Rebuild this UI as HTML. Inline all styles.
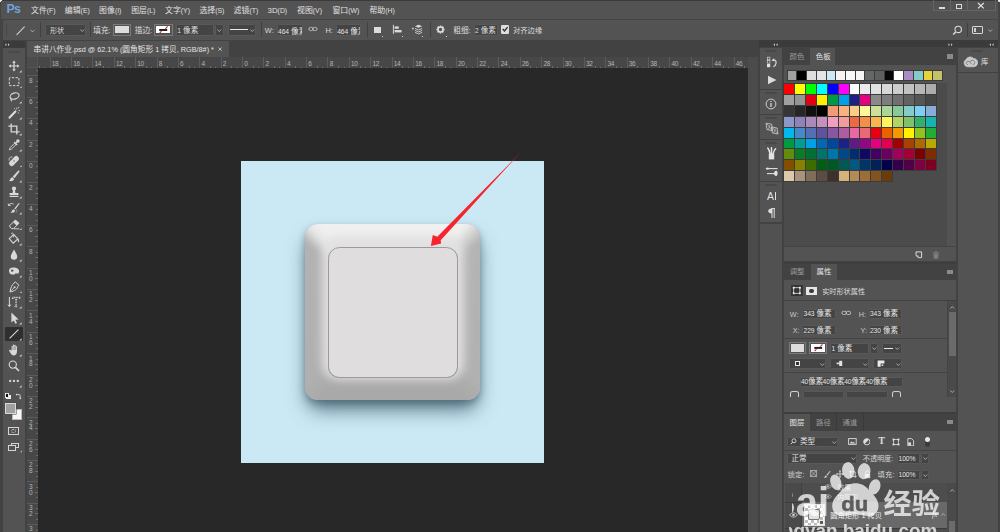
<!DOCTYPE html>
<html lang="zh-CN"><head><meta charset="utf-8"><title>Photoshop</title>
<style>
*{box-sizing:border-box;margin:0;padding:0}
html,body{width:1000px;height:532px;overflow:hidden;background:#535353}
body{position:relative;font-family:"Liberation Sans","Noto Sans CJK SC",sans-serif;font-size:7.6px;color:#d8d8d8;line-height:1}
.a{position:absolute}
i{position:absolute;display:block;font-style:normal}
.t{position:absolute;white-space:nowrap;line-height:10px;height:10px}
#sw i{outline:0.4px solid #3c3c3c}
#rh b,#rv b{position:absolute;font-weight:normal;font-size:6.5px;line-height:6px;color:#b4b4b4;letter-spacing:-0.35px}
.ig{left:759.8px;width:22.2px;background:#535353}
.gr{left:765px;width:12px;height:1.5px;background:#484848;border-radius:1px}
.hb{width:6px;height:4.2px;background:#8a8a8a}
.p{font-size:7.2px;color:#c9c9c9}
.pv{font-size:7.5px;color:#e4e4e4}
em{font-style:normal;font-size:7.3px}
u{text-decoration:none;font-size:6.7px;letter-spacing:-0.1px}
.m{top:5.6px}
.o{top:25.6px;font-size:7.6px;color:#dedede}
.sep{top:22px;width:0.8px;height:15.4px;background:#404040}
.fld{top:24.4px;height:11.2px;background:#444;border:0.6px solid #595959;border-radius:1.3px}
.chev{top:29.4px;width:5px;height:3.4px;overflow:visible}
.chev path{stroke:#bdbdbd;stroke-width:0.8;fill:none}
.dot{top:35.6px;width:1.3px;height:1.1px;background:#cfcfcf}
s{text-decoration:none;font-size:6.9px}
</style></head><body>
<!-- window frame -->
<div class="a" style="left:0;top:0;width:1000px;height:1px;background:#3a3a3a"></div>
<div class="a" style="left:997.5px;top:0;width:3px;height:532px;background:#444"></div>
<div class="a" style="left:0;top:0;width:2.6px;height:532px;background:#444"></div>
<div class="a" style="left:-1px;top:-1px;width:3px;height:3px;border-radius:50%;background:#e8eef6"></div>
<div class="a" style="left:998px;top:-1px;width:3px;height:3px;border-radius:50%;background:#e8eef6"></div>
<!-- menubar -->
<div class="a" id="menubar" style="left:0.8px;top:1px;width:997px;height:17.7px;background:#535353"></div>
<div class="t" style="left:6.6px;top:3.2px;font-size:12.3px;line-height:13px;height:13px;font-weight:bold;color:#6ea4d9;letter-spacing:-0.9px">Ps</div>
<div id="menus" style="font-size:7.9px;color:#e2e2e2">
<div class="t m" style="left:31px">文件<s>(F)</s></div>
<div class="t m" style="left:64.8px">编辑<s>(E)</s></div>
<div class="t m" style="left:99.1px">图像<s>(I)</s></div>
<div class="t m" style="left:131.2px">图层<s>(L)</s></div>
<div class="t m" style="left:165px">文字<s>(Y)</s></div>
<div class="t m" style="left:199.4px">选择<s>(S)</s></div>
<div class="t m" style="left:233.6px">滤镜<s>(T)</s></div>
<div class="t m" style="left:267.5px">3D<s>(D)</s></div>
<div class="t m" style="left:297px">视图<s>(V)</s></div>
<div class="t m" style="left:332.4px">窗口<s>(W)</s></div>
<div class="t m" style="left:369.4px">帮助<s>(H)</s></div>
</div>
<!-- window controls -->
<div class="a" style="left:933.3px;top:0;width:62.6px;height:11.4px;border:0.7px solid #646464;border-top:none"></div>
<div class="a" style="left:950.3px;top:0;width:0.7px;height:11.2px;background:#646464"></div>
<div class="a" style="left:967px;top:0;width:0.7px;height:11.2px;background:#646464"></div>
<div class="a" style="left:938.9px;top:7.1px;width:6px;height:1.9px;background:#dcdcdc"></div>
<div class="a" style="left:955.6px;top:4.3px;width:6.6px;height:4.6px;border:1.1px solid #dcdcdc;border-top-width:1.6px"></div>
<svg class="a" style="left:977px;top:2px" width="8" height="8" viewBox="0 0 8 8"><path d="M1 1 L6.8 6.4 M6.8 1 L1 6.4" stroke="#e0e0e0" stroke-width="1.2" fill="none"/></svg>

<div class="a" style="left:0;top:18.6px;width:1000px;height:1.7px;background:#454545"></div>
<!-- options bar -->
<div class="a" id="optbar" style="left:2.6px;top:20.1px;width:995px;height:20px;background:#535353;border-radius:1.5px 1.5px 0 0"></div>
<div id="opts">
<!-- grip -->
<div class="a" style="left:6.2px;top:23.5px;width:0.8px;height:12.5px;background:#474747"></div>
<!-- line tool icon -->
<svg class="a" style="left:14px;top:24px" width="24" height="14" viewBox="0 0 24 14"><path d="M2.6 10.8 L10.6 2.6" stroke="#d0d0d0" stroke-width="1.1" fill="none"/><path d="M16.6 5.9 L18.5 7.9 L20.4 5.9" stroke="#bdbdbd" stroke-width="0.8" fill="none"/></svg>
<div class="a sep" style="left:40px"></div>
<!-- shape dropdown -->
<div class="a fld" style="left:44.9px;width:41px"></div>
<div class="t o" style="left:50px;font-size:7.1px">形状</div>
<svg class="a chev" style="left:80px"><path d="M0.4 0.5 L2.3 2.5 L4.2 0.5"/></svg>
<div class="a sep" style="left:89.5px"></div>
<div class="t o" style="left:93.3px">填充:</div>
<div class="a" style="left:113px;top:23.6px;width:18.2px;height:12px;border:0.8px solid #7a7a7a;padding:1.2px"><div style="width:100%;height:100%;background:#dfdcdc"></div></div>
<div class="t o" style="left:134.8px">描边:</div>
<div class="a" style="left:154.2px;top:23.6px;width:18.4px;height:12px;border:0.8px solid #7a7a7a;padding:1.2px"><div style="width:100%;height:100%;background:#fff;position:relative">
<svg class="a" style="left:0;top:0" width="14.4" height="8" viewBox="0 0 14.4 8"><rect x="3.2" y="3" width="8" height="2" fill="#222"/><path d="M3.6 7.4 L5.4 5.2 M9.4 2.8 L11.6 0.4" stroke="#e8202a" stroke-width="1.1"/></svg></div></div>
<div class="a fld" style="left:175.9px;width:38.2px"></div>
<div class="t o" style="left:177.3px"><u>1</u> 像素</div>
<div class="a fld" style="left:215.2px;width:8.8px"></div>
<svg class="a chev" style="left:217.3px"><path d="M0.4 0.5 L2.3 2.5 L4.2 0.5"/></svg>
<div class="a fld" style="left:227.8px;width:28.6px"></div>
<div class="a" style="left:230.1px;top:29.1px;width:17.5px;height:1.3px;background:#e8e8e8"></div>
<svg class="a chev" style="left:249.6px"><path d="M0.4 0.5 L2.3 2.5 L4.2 0.5"/></svg>
<div class="a sep" style="left:260.8px"></div>
<div class="t o" style="left:264.8px;font-size:7.4px">W:</div>
<div class="a fld" style="left:276.6px;width:26px;overflow:hidden"><div class="t" style="left:0.5px;top:1.2px;font-size:7.7px;color:#e6e6e6"><u>464</u> 像素</div></div>
<svg class="a" style="left:307.6px;top:26.4px" width="10" height="6" viewBox="0 0 10 6"><rect x="0.9" y="1.4" width="4.2" height="3.2" rx="1.6" fill="none" stroke="#c4c4c4" stroke-width="0.9"/><rect x="4.9" y="1.4" width="4.2" height="3.2" rx="1.6" fill="none" stroke="#c4c4c4" stroke-width="0.9"/></svg>
<div class="t o" style="left:325.4px;font-size:7.4px">H:</div>
<div class="a fld" style="left:335.7px;width:25.8px;overflow:hidden"><div class="t" style="left:0.5px;top:1.2px;font-size:7.7px;color:#e6e6e6"><u>464</u> 像素</div></div>
<div class="a sep" style="left:366.7px"></div>
<!-- path ops -->
<div class="a" style="left:373.8px;top:26.7px;width:6.9px;height:6.3px;background:#dcdcdc"></div>
<div class="a dot" style="left:381.7px"></div>
<!-- align -->
<svg class="a" style="left:392px;top:24px" width="11" height="11" viewBox="0 0 11 11"><path d="M1.4 0.8 V9.8" stroke="#d8d8d8" stroke-width="1"/><rect x="2.6" y="2.4" width="4.2" height="2.4" fill="#d8d8d8"/><rect x="2.6" y="6" width="7" height="2.4" fill="#d8d8d8"/></svg>
<div class="a dot" style="left:401.9px"></div>
<!-- arrange -->
<svg class="a" style="left:411px;top:24px" width="13" height="12" viewBox="0 0 13 12"><path d="M0.8 4.6 H3 M1.9 3.5 V5.7" stroke="#d8d8d8" stroke-width="0.7"/><path d="M7.6 0.8 L11.2 2.3 L7.6 3.8 L4 2.3 Z" fill="#dcdcdc"/><path d="M4 4.4 L7.6 5.9 L11.2 4.4 M4 6.4 L7.6 7.9 L11.2 6.4 M4 8.4 L7.6 9.9 L11.2 8.4" stroke="#cfcfcf" stroke-width="0.9" fill="none"/></svg>
<div class="a dot" style="left:421.8px"></div>
<div class="a sep" style="left:429.8px"></div>
<!-- gear -->
<svg class="a" style="left:436px;top:25px" width="9" height="9" viewBox="0 0 9 9"><circle cx="4.5" cy="4.5" r="2.5" fill="none" stroke="#e0e0e0" stroke-width="1.5"/><g stroke="#e0e0e0" stroke-width="1.5"><path d="M4.5 0.4 V1.8 M4.5 7.2 V8.6 M0.4 4.5 H1.8 M7.2 4.5 H8.6 M1.6 1.6 L2.6 2.6 M6.4 6.4 L7.4 7.4 M1.6 7.4 L2.6 6.4 M6.4 2.6 L7.4 1.6"/></g></svg>
<div class="a dot" style="left:445.5px"></div>
<div class="t o" style="left:453.3px">粗细:</div>
<div class="a fld" style="left:473.6px;width:24.8px"></div>
<div class="t o" style="left:475px"><u>2</u> 像素</div>
<!-- checkbox -->
<div class="a" style="left:500.9px;top:25.3px;width:8.2px;height:8.3px;background:#dedede;border-radius:1.2px"></div>
<svg class="a" style="left:500.9px;top:25.3px" width="8.2" height="8.3" viewBox="0 0 8.2 8.3"><path d="M1.7 4 L3.5 5.9 L6.6 2.1" stroke="#2c2c2c" stroke-width="1.3" fill="none"/></svg>
<div class="t o" style="left:513px;font-size:7.3px">对齐边缘</div>
<!-- right: search / workspace -->
<svg class="a" style="left:951.5px;top:24.5px" width="11" height="11" viewBox="0 0 11 11"><circle cx="6.2" cy="4.4" r="3.2" fill="none" stroke="#dcdcdc" stroke-width="1.1"/><path d="M3.9 6.8 L1.2 9.5" stroke="#dcdcdc" stroke-width="1.5"/></svg>
<div class="a" style="left:967.4px;top:23px;width:0.8px;height:13.6px;background:#404040"></div>
<div class="a" style="left:972.2px;top:25.9px;width:10.8px;height:8px;border:1px solid #d8d8d8;border-radius:1px"></div>
<div class="a" style="left:973.6px;top:27.6px;width:2.6px;height:4.8px;background:#d0d0d0"></div>
<svg class="a chev" style="left:988.4px"><path d="M0.4 0.5 L2.3 2.5 L4.2 0.5"/></svg>
</div>

<!-- dark strip under options -->
<div class="a" style="left:0;top:40px;width:1000px;height:492px;background:#424242"></div>
<!-- toolbar -->
<div class="a" style="left:3.2px;top:40.5px;width:22.3px;height:7px;background:#3b3b3b"></div>
<div class="a" style="left:3.2px;top:47.6px;width:22.3px;height:485px;background:#535353"></div>
<div class="a" style="left:8.3px;top:51.2px;width:11.6px;height:1.6px;background:#494949;border-radius:1px"></div>
<svg class="a" style="left:5.90px;top:57.90px" width="16" height="16" viewBox="0 0 16 16"><path d="M8 2.6 L9.8 4.8 H8.6 V7.4 H11.2 V6.2 L13.4 8 L11.2 9.8 V8.6 H8.6 V11.2 H9.8 L8 13.4 L6.2 11.2 H7.4 V8.6 H4.8 V9.8 L2.6 8 L4.8 6.2 V7.4 H7.4 V4.8 H6.2 Z" fill="#d9d9d9"/></svg>
<svg class="a" style="left:19.4px;top:69.90px" width="2.8" height="2.8" viewBox="0 0 2.8 2.8"><path d="M2.6 0.2 V2.6 H0.2 Z" fill="#d2d2d2"/></svg>
<svg class="a" style="left:5.90px;top:73.67px" width="16" height="16" viewBox="0 0 16 16"><rect x="3.3" y="3.7" width="9.6" height="7.9" fill="none" stroke="#d9d9d9" stroke-width="1" stroke-dasharray="2.3 1.4" stroke-dashoffset="1.1"/></svg>
<svg class="a" style="left:19.4px;top:85.67px" width="2.8" height="2.8" viewBox="0 0 2.8 2.8"><path d="M2.6 0.2 V2.6 H0.2 Z" fill="#d2d2d2"/></svg>
<svg class="a" style="left:5.90px;top:89.44px" width="16" height="16" viewBox="0 0 16 16"><ellipse cx="8.6" cy="7" rx="4.6" ry="3" transform="rotate(-18 8.6 7)" fill="none" stroke="#d9d9d9" stroke-width="1.1"/><path d="M4.8 8.6 C4.2 10 5 11.4 6.4 11.2 M5 9.4 L5.4 12.4" stroke="#d9d9d9" stroke-width="0.9" fill="none"/></svg>
<svg class="a" style="left:19.4px;top:101.44px" width="2.8" height="2.8" viewBox="0 0 2.8 2.8"><path d="M2.6 0.2 V2.6 H0.2 Z" fill="#d2d2d2"/></svg>
<svg class="a" style="left:5.90px;top:105.21px" width="16" height="16" viewBox="0 0 16 16"><path d="M3.6 12.6 L9.4 6.4" stroke="#d9d9d9" stroke-width="2.2" stroke-linecap="round"/><path d="M10.8 2.6 V4.4 M12.6 5.6 H14 M12 3.2 L13.2 2.2 M11.8 7.4 L13 8.4 M8.2 3.2 L9.2 4.2" stroke="#d9d9d9" stroke-width="0.9"/></svg>
<svg class="a" style="left:19.4px;top:117.21px" width="2.8" height="2.8" viewBox="0 0 2.8 2.8"><path d="M2.6 0.2 V2.6 H0.2 Z" fill="#d2d2d2"/></svg>
<svg class="a" style="left:5.90px;top:120.98px" width="16" height="16" viewBox="0 0 16 16"><path d="M5.2 2.4 V10.8 H13.6 M2.4 5.2 H10.8 V13.6" fill="none" stroke="#d9d9d9" stroke-width="1.3"/></svg>
<svg class="a" style="left:19.4px;top:132.98px" width="2.8" height="2.8" viewBox="0 0 2.8 2.8"><path d="M2.6 0.2 V2.6 H0.2 Z" fill="#d2d2d2"/></svg>
<svg class="a" style="left:5.90px;top:136.75px" width="16" height="16" viewBox="0 0 16 16"><path d="M3.4 12.8 L4 10.8 L8.6 6.2 L10 7.6 L5.4 12.2 Z" fill="none" stroke="#d9d9d9" stroke-width="0.9"/><path d="M8.2 5 L11.2 8 M9.6 6.4 L11.6 4.4" stroke="#d9d9d9" stroke-width="1.3"/><circle cx="11.9" cy="4" r="1.7" fill="#d9d9d9"/></svg>
<svg class="a" style="left:19.4px;top:148.75px" width="2.8" height="2.8" viewBox="0 0 2.8 2.8"><path d="M2.6 0.2 V2.6 H0.2 Z" fill="#d2d2d2"/></svg>
<svg class="a" style="left:5.90px;top:152.52px" width="16" height="16" viewBox="0 0 16 16"><rect x="2.2" y="5.4" width="11.6" height="5.2" rx="2.2" transform="rotate(-45 8 8)" fill="#d9d9d9"/><path d="M6.4 8 H9.6 M8 6.4 V9.6" stroke="#535353" stroke-width="0.6" stroke-dasharray="0.6 0.6" transform="rotate(-45 8 8)"/><path d="M3.2 7.6 C2.4 5.2 4.4 3.4 6.4 4" fill="none" stroke="#d9d9d9" stroke-width="0.8"/></svg>
<svg class="a" style="left:19.4px;top:164.52px" width="2.8" height="2.8" viewBox="0 0 2.8 2.8"><path d="M2.6 0.2 V2.6 H0.2 Z" fill="#d2d2d2"/></svg>
<svg class="a" style="left:5.90px;top:168.29px" width="16" height="16" viewBox="0 0 16 16"><path d="M12.6 2.2 L6.8 8.6 L8.4 10.2 L13.6 3.4 Z" fill="#d9d9d9"/><path d="M6.2 9.2 C4.2 9.6 4.8 12 2.8 12.8 C5.4 13.8 8.2 12.8 8 10.8 Z" fill="#d9d9d9"/></svg>
<svg class="a" style="left:19.4px;top:180.29px" width="2.8" height="2.8" viewBox="0 0 2.8 2.8"><path d="M2.6 0.2 V2.6 H0.2 Z" fill="#d2d2d2"/></svg>
<svg class="a" style="left:5.90px;top:184.06px" width="16" height="16" viewBox="0 0 16 16"><circle cx="8" cy="4.6" r="2.1" fill="#d9d9d9"/><path d="M7 6 H9 L9.4 9 H12.4 V11 H3.6 V9 H6.6 Z" fill="#d9d9d9"/><rect x="3.6" y="11.8" width="8.8" height="1.2" fill="#d9d9d9"/></svg>
<svg class="a" style="left:19.4px;top:196.06px" width="2.8" height="2.8" viewBox="0 0 2.8 2.8"><path d="M2.6 0.2 V2.6 H0.2 Z" fill="#d2d2d2"/></svg>
<svg class="a" style="left:5.90px;top:199.83px" width="16" height="16" viewBox="0 0 16 16"><path d="M13 2.8 L8.4 8.6 L9.4 9.6 L13.6 3.4 Z" fill="#d9d9d9"/><path d="M7.8 9.2 C6 9.4 6.4 11.6 4.4 12.4 C6.8 13.2 9 12.2 9 10.4 Z" fill="#d9d9d9"/><path d="M2.6 5.4 C3.6 3.4 6 3 7.6 4.2 M2.2 3.6 L2.6 5.6 L4.6 5.4" fill="none" stroke="#d9d9d9" stroke-width="0.9"/><path d="M10.6 9.4 C11.2 10.6 10.8 11.8 10 12.6" fill="none" stroke="#9a9a9a" stroke-width="0.8"/></svg>
<svg class="a" style="left:19.4px;top:211.83px" width="2.8" height="2.8" viewBox="0 0 2.8 2.8"><path d="M2.6 0.2 V2.6 H0.2 Z" fill="#d2d2d2"/></svg>
<svg class="a" style="left:5.90px;top:215.60px" width="16" height="16" viewBox="0 0 16 16"><path d="M3.4 10 L9.4 4 L13 7.2 L7.6 12.6 H5.4 Z" fill="none" stroke="#d9d9d9" stroke-width="1"/><path d="M7.2 6.2 L9.4 4 L13 7.2 L10.6 9.6 Z" fill="#d9d9d9"/><path d="M7.6 12.8 H13.4" stroke="#d9d9d9" stroke-width="0.9"/></svg>
<svg class="a" style="left:19.4px;top:227.60px" width="2.8" height="2.8" viewBox="0 0 2.8 2.8"><path d="M2.6 0.2 V2.6 H0.2 Z" fill="#d2d2d2"/></svg>
<svg class="a" style="left:5.90px;top:231.37px" width="16" height="16" viewBox="0 0 16 16"><path d="M3.2 7.6 L7.8 3.6 L11.8 8 L7.2 12.2 Z" fill="none" stroke="#d9d9d9" stroke-width="1.1"/><path d="M5.4 3 C5.2 1.8 7 1.6 7.2 3 L7.4 6.4" fill="none" stroke="#d9d9d9" stroke-width="0.8"/><path d="M11 6.4 C12.8 7.4 13.6 9.4 13 11.6 C11.8 11 11.4 9.4 11.8 8 Z" fill="#d9d9d9"/></svg>
<svg class="a" style="left:19.4px;top:243.37px" width="2.8" height="2.8" viewBox="0 0 2.8 2.8"><path d="M2.6 0.2 V2.6 H0.2 Z" fill="#d2d2d2"/></svg>
<svg class="a" style="left:5.90px;top:247.14px" width="16" height="16" viewBox="0 0 16 16"><path d="M8 2.6 C9.4 5.4 11.2 7.4 11.2 9.6 A3.2 3.2 0 0 1 4.8 9.6 C4.8 7.4 6.6 5.4 8 2.6 Z" fill="#d9d9d9"/></svg>
<svg class="a" style="left:19.4px;top:259.14px" width="2.8" height="2.8" viewBox="0 0 2.8 2.8"><path d="M2.6 0.2 V2.6 H0.2 Z" fill="#d2d2d2"/></svg>
<svg class="a" style="left:5.90px;top:262.91px" width="16" height="16" viewBox="0 0 16 16"><path d="M3 7.6 C3 4.6 6.2 4.2 8.6 4.6 C11.2 5 13.2 6.4 13.2 8.4 L12.4 10.6 H9.2 L8.6 11.6 H5.6 C3.8 11.2 3 9.6 3 7.6 Z" fill="#d9d9d9"/><circle cx="6.2" cy="7.6" r="1.2" fill="#535353"/></svg>
<svg class="a" style="left:19.4px;top:274.91px" width="2.8" height="2.8" viewBox="0 0 2.8 2.8"><path d="M2.6 0.2 V2.6 H0.2 Z" fill="#d2d2d2"/></svg>
<svg class="a" style="left:5.90px;top:278.68px" width="16" height="16" viewBox="0 0 16 16"><path d="M9.2 2.8 L13 6.2 L11.8 7.4 C11.4 10 9 12 4 13 C4.6 8.4 6.2 5.6 8.2 4 Z" fill="none" stroke="#d9d9d9" stroke-width="1"/><path d="M4.2 12.8 L8.2 8.6" stroke="#d9d9d9" stroke-width="0.8"/><circle cx="8.6" cy="8.2" r="1" fill="#d9d9d9"/></svg>
<svg class="a" style="left:19.4px;top:290.68px" width="2.8" height="2.8" viewBox="0 0 2.8 2.8"><path d="M2.6 0.2 V2.6 H0.2 Z" fill="#d2d2d2"/></svg>
<svg class="a" style="left:5.90px;top:294.45px" width="16" height="16" viewBox="0 0 16 16"><path d="M3.4 3 V12.2 M2 10.6 L3.4 12.6 L4.8 10.6" fill="none" stroke="#d9d9d9" stroke-width="1"/><path d="M6.6 5 V3.4 H13.6 V5 M10.1 3.4 V12.4 M8.6 12.6 H11.6" fill="none" stroke="#d9d9d9" stroke-width="1.5" stroke-dasharray="0.9 0.7"/></svg>
<svg class="a" style="left:19.4px;top:306.45px" width="2.8" height="2.8" viewBox="0 0 2.8 2.8"><path d="M2.6 0.2 V2.6 H0.2 Z" fill="#d2d2d2"/></svg>
<svg class="a" style="left:5.90px;top:310.22px" width="16" height="16" viewBox="0 0 16 16"><path d="M5.4 2.4 V12.6 L7.8 10.4 L9.4 13.8 L11 13 L9.4 9.8 L12.6 9.6 Z" fill="#d9d9d9"/></svg>
<svg class="a" style="left:19.4px;top:322.22px" width="2.8" height="2.8" viewBox="0 0 2.8 2.8"><path d="M2.6 0.2 V2.6 H0.2 Z" fill="#d2d2d2"/></svg>
<div class="a" style="left:4.9px;top:326.79px;width:18.6px;height:14.2px;background:#2f2f2f;border-radius:1px"></div>
<svg class="a" style="left:5.90px;top:325.99px" width="16" height="16" viewBox="0 0 16 16"><path d="M3.6 12.4 L12.4 3.6" stroke="#d9d9d9" stroke-width="1.1"/></svg>
<svg class="a" style="left:19.4px;top:337.99px" width="2.8" height="2.8" viewBox="0 0 2.8 2.8"><path d="M2.6 0.2 V2.6 H0.2 Z" fill="#d2d2d2"/></svg>
<svg class="a" style="left:5.90px;top:341.76px" width="16" height="16" viewBox="0 0 16 16"><path d="M5.6 8.4 V4.4 C5.6 3.4 6.9 3.4 6.9 4.4 V3.2 C6.9 2.2 8.3 2.2 8.3 3.2 V3.6 C8.3 2.6 9.7 2.6 9.7 3.6 V4.6 C9.7 3.8 11 3.8 11 4.8 V9.6 C11 12 9.8 13.4 8.2 13.4 H7.4 C5.8 13.4 4.8 12 3.2 8.8 C2.8 7.8 4 7.2 4.6 8.2 Z" fill="#d9d9d9"/><path d="M6.9 4.4 V8 M8.3 3.6 V8 M9.7 4.6 V8" stroke="#535353" stroke-width="0.45"/></svg>
<svg class="a" style="left:19.4px;top:353.76px" width="2.8" height="2.8" viewBox="0 0 2.8 2.8"><path d="M2.6 0.2 V2.6 H0.2 Z" fill="#d2d2d2"/></svg>
<svg class="a" style="left:5.90px;top:357.53px" width="16" height="16" viewBox="0 0 16 16"><circle cx="6.8" cy="6.6" r="3.6" fill="none" stroke="#d9d9d9" stroke-width="1.1"/><path d="M9.4 9.4 L13 13" stroke="#d9d9d9" stroke-width="1.7"/></svg>
<svg class="a" style="left:5.90px;top:373.30px" width="16" height="16" viewBox="0 0 16 16"><circle cx="4.2" cy="8" r="1.15" fill="#d9d9d9"/><circle cx="8" cy="8" r="1.15" fill="#d9d9d9"/><circle cx="11.8" cy="8" r="1.15" fill="#d9d9d9"/></svg>
<svg class="a" style="left:19.4px;top:385.30px" width="2.8" height="2.8" viewBox="0 0 2.8 2.8"><path d="M2.6 0.2 V2.6 H0.2 Z" fill="#d2d2d2"/></svg>
<div class="a" style="left:6.4px;top:394.8px;width:4.2px;height:4.2px;background:#f0f0f0"></div>
<div class="a" style="left:4.6px;top:393.2px;width:4.4px;height:4.4px;background:#111;border:0.6px solid #e8e8e8"></div>
<svg class="a" style="left:15.4px;top:392.6px" width="7" height="7" viewBox="0 0 7 7"><path d="M1.4 1.6 H4.4 C5 1.6 5.2 1.8 5.2 2.4 V5.4" fill="none" stroke="#d9d9d9" stroke-width="0.9"/><path d="M2 0.4 L0.6 1.6 L2 2.8 Z M4 4.8 L5.2 6.4 L6.4 4.8 Z" fill="#d9d9d9"/></svg>
<div class="a" style="left:11.6px;top:409px;width:10.8px;height:10.8px;background:#f6f6f6;border:0.5px solid #bbb"></div>
<div class="a" style="left:5.2px;top:403px;width:11.2px;height:11px;background:#a0a0a0;border:0.8px solid #dadada;box-shadow:0 0 0 0.5px #444"></div>
<div class="a" style="left:8.2px;top:427.2px;width:10.6px;height:7.6px;border:0.9px solid #d4d4d4"></div>
<div class="a" style="left:11.3px;top:428.9px;width:4.4px;height:4.2px;border:0.8px dotted #cfcfcf;border-radius:50%"></div>
<div class="a" style="left:11.2px;top:443px;width:7.6px;height:5.4px;border:0.9px solid #d4d4d4"></div>
<div class="a" style="left:8.2px;top:445.4px;width:7.4px;height:5.4px;border:0.9px solid #d4d4d4;background:#535353"></div>
<svg class="a" style="left:19.6px;top:450.4px" width="2.4" height="2.4" viewBox="0 0 2.4 2.4"><path d="M2.2 0.2 V2.2 H0.2 Z" fill="#c8c8c8"/></svg>
<svg class="a" style="left:5.4px;top:42.6px" width="6" height="3.4" viewBox="0 0 6 3.4"><path d="M0.4 0.3 L2 1.7 L0.4 3.1 Z M3 0.3 L4.6 1.7 L3 3.1 Z" fill="#c4c4c4"/></svg>
<!-- document tab bar -->
<div class="a" style="left:27.2px;top:41px;width:730px;height:16.4px;background:#424242"></div>
<div class="a" style="left:27.2px;top:41px;width:202px;height:16.4px;background:#535353"></div>
<div class="t" id="tabtitle" style="left:33.5px;top:44.6px;font-size:7.7px;color:#e4e4e4">串讲八作业<em>.psd @ 62.1% (</em>圆角矩形<em> 1 </em>拷贝<em>, RGB/8#) *</em></div>
<svg class="a" style="left:218.1px;top:47.2px" width="4.4" height="4.4" viewBox="0 0 5 5"><path d="M0.6 0.6 L4.2 4.2 M4.2 0.6 L0.6 4.2" stroke="#dcdcdc" stroke-width="0.9"/></svg>
<!-- rulers -->
<div class="a" style="left:27.2px;top:57.4px;width:721px;height:10.8px;background:#474747"></div>
<div class="a" style="left:27.2px;top:57.4px;width:10.6px;height:475px;background:#474747"></div>
<div class="a" style="left:748px;top:57.4px;width:10px;height:475px;background:#4b4b4b"></div>
<!-- canvas -->
<div class="a" style="left:37.8px;top:68.2px;width:710.2px;height:464px;background:#282828"></div>
<div class="a" style="left:27.2px;top:57.4px;width:10.6px;height:10.8px;background:#4c4c4c;border-right:0.7px solid #555;border-bottom:0.7px solid #555"></div>
<div id="rh" class="a" style="left:37.8px;top:57.4px;width:710.2px;height:10.8px;overflow:hidden">
<i style="left:1.18px;top:8.90px;width:0.7px;height:1.9px;background:#707070"></i>
<i style="left:6.53px;top:9.50px;width:0.7px;height:1.3px;background:#707070"></i>
<i style="left:11.87px;top:0;width:0.8px;height:10.8px;background:#5b5b5b"></i>
<b style="left:14.07px;top:3.9px">18</b>
<i style="left:22.55px;top:8.90px;width:0.7px;height:1.9px;background:#707070"></i>
<i style="left:27.90px;top:9.50px;width:0.7px;height:1.3px;background:#707070"></i>
<i style="left:33.24px;top:0;width:0.8px;height:10.8px;background:#5b5b5b"></i>
<b style="left:35.44px;top:3.9px">16</b>
<i style="left:43.92px;top:8.90px;width:0.7px;height:1.9px;background:#707070"></i>
<i style="left:49.27px;top:9.50px;width:0.7px;height:1.3px;background:#707070"></i>
<i style="left:54.61px;top:0;width:0.8px;height:10.8px;background:#5b5b5b"></i>
<b style="left:56.81px;top:3.9px">14</b>
<i style="left:65.30px;top:8.90px;width:0.7px;height:1.9px;background:#707070"></i>
<i style="left:70.64px;top:9.50px;width:0.7px;height:1.3px;background:#707070"></i>
<i style="left:75.98px;top:0;width:0.8px;height:10.8px;background:#5b5b5b"></i>
<b style="left:78.18px;top:3.9px">12</b>
<i style="left:86.67px;top:8.90px;width:0.7px;height:1.9px;background:#707070"></i>
<i style="left:92.01px;top:9.50px;width:0.7px;height:1.3px;background:#707070"></i>
<i style="left:97.35px;top:0;width:0.8px;height:10.8px;background:#5b5b5b"></i>
<b style="left:99.55px;top:3.9px">10</b>
<i style="left:108.03px;top:8.90px;width:0.7px;height:1.9px;background:#707070"></i>
<i style="left:113.38px;top:9.50px;width:0.7px;height:1.3px;background:#707070"></i>
<i style="left:118.72px;top:0;width:0.8px;height:10.8px;background:#5b5b5b"></i>
<b style="left:120.92px;top:3.9px">8</b>
<i style="left:129.40px;top:8.90px;width:0.7px;height:1.9px;background:#707070"></i>
<i style="left:134.75px;top:9.50px;width:0.7px;height:1.3px;background:#707070"></i>
<i style="left:140.09px;top:0;width:0.8px;height:10.8px;background:#5b5b5b"></i>
<b style="left:142.29px;top:3.9px">6</b>
<i style="left:150.77px;top:8.90px;width:0.7px;height:1.9px;background:#707070"></i>
<i style="left:156.12px;top:9.50px;width:0.7px;height:1.3px;background:#707070"></i>
<i style="left:161.46px;top:0;width:0.8px;height:10.8px;background:#5b5b5b"></i>
<b style="left:163.66px;top:3.9px">4</b>
<i style="left:172.14px;top:8.90px;width:0.7px;height:1.9px;background:#707070"></i>
<i style="left:177.49px;top:9.50px;width:0.7px;height:1.3px;background:#707070"></i>
<i style="left:182.83px;top:0;width:0.8px;height:10.8px;background:#5b5b5b"></i>
<b style="left:185.03px;top:3.9px">2</b>
<i style="left:193.51px;top:8.90px;width:0.7px;height:1.9px;background:#707070"></i>
<i style="left:198.86px;top:9.50px;width:0.7px;height:1.3px;background:#707070"></i>
<i style="left:204.20px;top:0;width:0.8px;height:10.8px;background:#5b5b5b"></i>
<b style="left:206.40px;top:3.9px">0</b>
<i style="left:214.88px;top:8.90px;width:0.7px;height:1.9px;background:#707070"></i>
<i style="left:220.23px;top:9.50px;width:0.7px;height:1.3px;background:#707070"></i>
<i style="left:225.57px;top:0;width:0.8px;height:10.8px;background:#5b5b5b"></i>
<b style="left:227.77px;top:3.9px">2</b>
<i style="left:236.25px;top:8.90px;width:0.7px;height:1.9px;background:#707070"></i>
<i style="left:241.60px;top:9.50px;width:0.7px;height:1.3px;background:#707070"></i>
<i style="left:246.94px;top:0;width:0.8px;height:10.8px;background:#5b5b5b"></i>
<b style="left:249.14px;top:3.9px">4</b>
<i style="left:257.62px;top:8.90px;width:0.7px;height:1.9px;background:#707070"></i>
<i style="left:262.97px;top:9.50px;width:0.7px;height:1.3px;background:#707070"></i>
<i style="left:268.31px;top:0;width:0.8px;height:10.8px;background:#5b5b5b"></i>
<b style="left:270.51px;top:3.9px">6</b>
<i style="left:279.00px;top:8.90px;width:0.7px;height:1.9px;background:#707070"></i>
<i style="left:284.34px;top:9.50px;width:0.7px;height:1.3px;background:#707070"></i>
<i style="left:289.68px;top:0;width:0.8px;height:10.8px;background:#5b5b5b"></i>
<b style="left:291.88px;top:3.9px">8</b>
<i style="left:300.37px;top:8.90px;width:0.7px;height:1.9px;background:#707070"></i>
<i style="left:305.71px;top:9.50px;width:0.7px;height:1.3px;background:#707070"></i>
<i style="left:311.05px;top:0;width:0.8px;height:10.8px;background:#5b5b5b"></i>
<b style="left:313.25px;top:3.9px">10</b>
<i style="left:321.74px;top:8.90px;width:0.7px;height:1.9px;background:#707070"></i>
<i style="left:327.08px;top:9.50px;width:0.7px;height:1.3px;background:#707070"></i>
<i style="left:332.42px;top:0;width:0.8px;height:10.8px;background:#5b5b5b"></i>
<b style="left:334.62px;top:3.9px">12</b>
<i style="left:343.11px;top:8.90px;width:0.7px;height:1.9px;background:#707070"></i>
<i style="left:348.45px;top:9.50px;width:0.7px;height:1.3px;background:#707070"></i>
<i style="left:353.79px;top:0;width:0.8px;height:10.8px;background:#5b5b5b"></i>
<b style="left:355.99px;top:3.9px">14</b>
<i style="left:364.48px;top:8.90px;width:0.7px;height:1.9px;background:#707070"></i>
<i style="left:369.82px;top:9.50px;width:0.7px;height:1.3px;background:#707070"></i>
<i style="left:375.16px;top:0;width:0.8px;height:10.8px;background:#5b5b5b"></i>
<b style="left:377.36px;top:3.9px">16</b>
<i style="left:385.85px;top:8.90px;width:0.7px;height:1.9px;background:#707070"></i>
<i style="left:391.19px;top:9.50px;width:0.7px;height:1.3px;background:#707070"></i>
<i style="left:396.53px;top:0;width:0.8px;height:10.8px;background:#5b5b5b"></i>
<b style="left:398.73px;top:3.9px">18</b>
<i style="left:407.22px;top:8.90px;width:0.7px;height:1.9px;background:#707070"></i>
<i style="left:412.56px;top:9.50px;width:0.7px;height:1.3px;background:#707070"></i>
<i style="left:417.90px;top:0;width:0.8px;height:10.8px;background:#5b5b5b"></i>
<b style="left:420.10px;top:3.9px">20</b>
<i style="left:428.59px;top:8.90px;width:0.7px;height:1.9px;background:#707070"></i>
<i style="left:433.93px;top:9.50px;width:0.7px;height:1.3px;background:#707070"></i>
<i style="left:439.27px;top:0;width:0.8px;height:10.8px;background:#5b5b5b"></i>
<b style="left:441.47px;top:3.9px">22</b>
<i style="left:449.96px;top:8.90px;width:0.7px;height:1.9px;background:#707070"></i>
<i style="left:455.30px;top:9.50px;width:0.7px;height:1.3px;background:#707070"></i>
<i style="left:460.64px;top:0;width:0.8px;height:10.8px;background:#5b5b5b"></i>
<b style="left:462.84px;top:3.9px">24</b>
<i style="left:471.32px;top:8.90px;width:0.7px;height:1.9px;background:#707070"></i>
<i style="left:476.67px;top:9.50px;width:0.7px;height:1.3px;background:#707070"></i>
<i style="left:482.01px;top:0;width:0.8px;height:10.8px;background:#5b5b5b"></i>
<b style="left:484.21px;top:3.9px">26</b>
<i style="left:492.69px;top:8.90px;width:0.7px;height:1.9px;background:#707070"></i>
<i style="left:498.04px;top:9.50px;width:0.7px;height:1.3px;background:#707070"></i>
<i style="left:503.38px;top:0;width:0.8px;height:10.8px;background:#5b5b5b"></i>
<b style="left:505.58px;top:3.9px">28</b>
<i style="left:514.07px;top:8.90px;width:0.7px;height:1.9px;background:#707070"></i>
<i style="left:519.41px;top:9.50px;width:0.7px;height:1.3px;background:#707070"></i>
<i style="left:524.75px;top:0;width:0.8px;height:10.8px;background:#5b5b5b"></i>
<b style="left:526.95px;top:3.9px">30</b>
<i style="left:535.43px;top:8.90px;width:0.7px;height:1.9px;background:#707070"></i>
<i style="left:540.78px;top:9.50px;width:0.7px;height:1.3px;background:#707070"></i>
<i style="left:546.12px;top:0;width:0.8px;height:10.8px;background:#5b5b5b"></i>
<b style="left:548.32px;top:3.9px">32</b>
<i style="left:556.81px;top:8.90px;width:0.7px;height:1.9px;background:#707070"></i>
<i style="left:562.15px;top:9.50px;width:0.7px;height:1.3px;background:#707070"></i>
<i style="left:567.49px;top:0;width:0.8px;height:10.8px;background:#5b5b5b"></i>
<b style="left:569.69px;top:3.9px">34</b>
<i style="left:578.17px;top:8.90px;width:0.7px;height:1.9px;background:#707070"></i>
<i style="left:583.52px;top:9.50px;width:0.7px;height:1.3px;background:#707070"></i>
<i style="left:588.86px;top:0;width:0.8px;height:10.8px;background:#5b5b5b"></i>
<b style="left:591.06px;top:3.9px">36</b>
<i style="left:599.55px;top:8.90px;width:0.7px;height:1.9px;background:#707070"></i>
<i style="left:604.89px;top:9.50px;width:0.7px;height:1.3px;background:#707070"></i>
<i style="left:610.23px;top:0;width:0.8px;height:10.8px;background:#5b5b5b"></i>
<b style="left:612.43px;top:3.9px">38</b>
<i style="left:620.91px;top:8.90px;width:0.7px;height:1.9px;background:#707070"></i>
<i style="left:626.26px;top:9.50px;width:0.7px;height:1.3px;background:#707070"></i>
<i style="left:631.60px;top:0;width:0.8px;height:10.8px;background:#5b5b5b"></i>
<b style="left:633.80px;top:3.9px">40</b>
<i style="left:642.29px;top:8.90px;width:0.7px;height:1.9px;background:#707070"></i>
<i style="left:647.63px;top:9.50px;width:0.7px;height:1.3px;background:#707070"></i>
<i style="left:652.97px;top:0;width:0.8px;height:10.8px;background:#5b5b5b"></i>
<b style="left:655.17px;top:3.9px">42</b>
<i style="left:663.65px;top:8.90px;width:0.7px;height:1.9px;background:#707070"></i>
<i style="left:669.00px;top:9.50px;width:0.7px;height:1.3px;background:#707070"></i>
<i style="left:674.34px;top:0;width:0.8px;height:10.8px;background:#5b5b5b"></i>
<b style="left:676.54px;top:3.9px">44</b>
<i style="left:685.03px;top:8.90px;width:0.7px;height:1.9px;background:#707070"></i>
<i style="left:690.37px;top:9.50px;width:0.7px;height:1.3px;background:#707070"></i>
<i style="left:695.71px;top:0;width:0.8px;height:10.8px;background:#5b5b5b"></i>
<b style="left:697.91px;top:3.9px">46</b>
<i style="left:706.39px;top:8.90px;width:0.7px;height:1.9px;background:#707070"></i>
<i style="left:711.74px;top:9.50px;width:0.7px;height:1.3px;background:#707070"></i>
</div>
<div id="rv" class="a" style="left:27.2px;top:68.2px;width:10.6px;height:464px;overflow:hidden">
<i style="left:9.00px;top:1.88px;width:1.6px;height:0.7px;background:#6c6c6c"></i>
<i style="left:0;top:7.22px;width:10.6px;height:0.8px;background:#5b5b5b"></i>
<b style="left:1.8px;top:9.52px">8</b>
<i style="left:9.00px;top:12.56px;width:1.6px;height:0.7px;background:#6c6c6c"></i>
<i style="left:8.00px;top:17.91px;width:2.6px;height:0.7px;background:#6c6c6c"></i>
<i style="left:9.00px;top:23.25px;width:1.6px;height:0.7px;background:#6c6c6c"></i>
<i style="left:0;top:28.59px;width:10.6px;height:0.8px;background:#5b5b5b"></i>
<b style="left:1.8px;top:30.89px">6</b>
<i style="left:9.00px;top:33.93px;width:1.6px;height:0.7px;background:#6c6c6c"></i>
<i style="left:8.00px;top:39.28px;width:2.6px;height:0.7px;background:#6c6c6c"></i>
<i style="left:9.00px;top:44.62px;width:1.6px;height:0.7px;background:#6c6c6c"></i>
<i style="left:0;top:49.96px;width:10.6px;height:0.8px;background:#5b5b5b"></i>
<b style="left:1.8px;top:52.26px">4</b>
<i style="left:9.00px;top:55.30px;width:1.6px;height:0.7px;background:#6c6c6c"></i>
<i style="left:8.00px;top:60.64px;width:2.6px;height:0.7px;background:#6c6c6c"></i>
<i style="left:9.00px;top:65.99px;width:1.6px;height:0.7px;background:#6c6c6c"></i>
<i style="left:0;top:71.33px;width:10.6px;height:0.8px;background:#5b5b5b"></i>
<b style="left:1.8px;top:73.63px">2</b>
<i style="left:9.00px;top:76.67px;width:1.6px;height:0.7px;background:#6c6c6c"></i>
<i style="left:8.00px;top:82.02px;width:2.6px;height:0.7px;background:#6c6c6c"></i>
<i style="left:9.00px;top:87.36px;width:1.6px;height:0.7px;background:#6c6c6c"></i>
<i style="left:0;top:92.70px;width:10.6px;height:0.8px;background:#5b5b5b"></i>
<b style="left:1.8px;top:95.00px">0</b>
<i style="left:9.00px;top:98.04px;width:1.6px;height:0.7px;background:#6c6c6c"></i>
<i style="left:8.00px;top:103.39px;width:2.6px;height:0.7px;background:#6c6c6c"></i>
<i style="left:9.00px;top:108.73px;width:1.6px;height:0.7px;background:#6c6c6c"></i>
<i style="left:0;top:114.07px;width:10.6px;height:0.8px;background:#5b5b5b"></i>
<b style="left:1.8px;top:116.37px">2</b>
<i style="left:9.00px;top:119.41px;width:1.6px;height:0.7px;background:#6c6c6c"></i>
<i style="left:8.00px;top:124.76px;width:2.6px;height:0.7px;background:#6c6c6c"></i>
<i style="left:9.00px;top:130.10px;width:1.6px;height:0.7px;background:#6c6c6c"></i>
<i style="left:0;top:135.44px;width:10.6px;height:0.8px;background:#5b5b5b"></i>
<b style="left:1.8px;top:137.74px">4</b>
<i style="left:9.00px;top:140.78px;width:1.6px;height:0.7px;background:#6c6c6c"></i>
<i style="left:8.00px;top:146.12px;width:2.6px;height:0.7px;background:#6c6c6c"></i>
<i style="left:9.00px;top:151.47px;width:1.6px;height:0.7px;background:#6c6c6c"></i>
<i style="left:0;top:156.81px;width:10.6px;height:0.8px;background:#5b5b5b"></i>
<b style="left:1.8px;top:159.11px">6</b>
<i style="left:9.00px;top:162.15px;width:1.6px;height:0.7px;background:#6c6c6c"></i>
<i style="left:8.00px;top:167.50px;width:2.6px;height:0.7px;background:#6c6c6c"></i>
<i style="left:9.00px;top:172.84px;width:1.6px;height:0.7px;background:#6c6c6c"></i>
<i style="left:0;top:178.18px;width:10.6px;height:0.8px;background:#5b5b5b"></i>
<b style="left:1.8px;top:180.48px">8</b>
<i style="left:9.00px;top:183.52px;width:1.6px;height:0.7px;background:#6c6c6c"></i>
<i style="left:8.00px;top:188.87px;width:2.6px;height:0.7px;background:#6c6c6c"></i>
<i style="left:9.00px;top:194.21px;width:1.6px;height:0.7px;background:#6c6c6c"></i>
<i style="left:0;top:199.55px;width:10.6px;height:0.8px;background:#5b5b5b"></i>
<b style="left:1.8px;top:201.85px">1</b>
<b style="left:1.8px;top:207.65px">0</b>
<i style="left:9.00px;top:204.89px;width:1.6px;height:0.7px;background:#6c6c6c"></i>
<i style="left:8.00px;top:210.24px;width:2.6px;height:0.7px;background:#6c6c6c"></i>
<i style="left:9.00px;top:215.58px;width:1.6px;height:0.7px;background:#6c6c6c"></i>
<i style="left:0;top:220.92px;width:10.6px;height:0.8px;background:#5b5b5b"></i>
<b style="left:1.8px;top:223.22px">1</b>
<b style="left:1.8px;top:229.02px">2</b>
<i style="left:9.00px;top:226.26px;width:1.6px;height:0.7px;background:#6c6c6c"></i>
<i style="left:8.00px;top:231.61px;width:2.6px;height:0.7px;background:#6c6c6c"></i>
<i style="left:9.00px;top:236.95px;width:1.6px;height:0.7px;background:#6c6c6c"></i>
<i style="left:0;top:242.29px;width:10.6px;height:0.8px;background:#5b5b5b"></i>
<b style="left:1.8px;top:244.59px">1</b>
<b style="left:1.8px;top:250.39px">4</b>
<i style="left:9.00px;top:247.63px;width:1.6px;height:0.7px;background:#6c6c6c"></i>
<i style="left:8.00px;top:252.98px;width:2.6px;height:0.7px;background:#6c6c6c"></i>
<i style="left:9.00px;top:258.32px;width:1.6px;height:0.7px;background:#6c6c6c"></i>
<i style="left:0;top:263.66px;width:10.6px;height:0.8px;background:#5b5b5b"></i>
<b style="left:1.8px;top:265.96px">1</b>
<b style="left:1.8px;top:271.76px">6</b>
<i style="left:9.00px;top:269.00px;width:1.6px;height:0.7px;background:#6c6c6c"></i>
<i style="left:8.00px;top:274.35px;width:2.6px;height:0.7px;background:#6c6c6c"></i>
<i style="left:9.00px;top:279.69px;width:1.6px;height:0.7px;background:#6c6c6c"></i>
<i style="left:0;top:285.03px;width:10.6px;height:0.8px;background:#5b5b5b"></i>
<b style="left:1.8px;top:287.33px">1</b>
<b style="left:1.8px;top:293.13px">8</b>
<i style="left:9.00px;top:290.37px;width:1.6px;height:0.7px;background:#6c6c6c"></i>
<i style="left:8.00px;top:295.72px;width:2.6px;height:0.7px;background:#6c6c6c"></i>
<i style="left:9.00px;top:301.06px;width:1.6px;height:0.7px;background:#6c6c6c"></i>
<i style="left:0;top:306.40px;width:10.6px;height:0.8px;background:#5b5b5b"></i>
<b style="left:1.8px;top:308.70px">2</b>
<b style="left:1.8px;top:314.50px">0</b>
<i style="left:9.00px;top:311.74px;width:1.6px;height:0.7px;background:#6c6c6c"></i>
<i style="left:8.00px;top:317.09px;width:2.6px;height:0.7px;background:#6c6c6c"></i>
<i style="left:9.00px;top:322.43px;width:1.6px;height:0.7px;background:#6c6c6c"></i>
<i style="left:0;top:327.77px;width:10.6px;height:0.8px;background:#5b5b5b"></i>
<b style="left:1.8px;top:330.07px">2</b>
<b style="left:1.8px;top:335.87px">2</b>
<i style="left:9.00px;top:333.11px;width:1.6px;height:0.7px;background:#6c6c6c"></i>
<i style="left:8.00px;top:338.46px;width:2.6px;height:0.7px;background:#6c6c6c"></i>
<i style="left:9.00px;top:343.80px;width:1.6px;height:0.7px;background:#6c6c6c"></i>
<i style="left:0;top:349.14px;width:10.6px;height:0.8px;background:#5b5b5b"></i>
<b style="left:1.8px;top:351.44px">2</b>
<b style="left:1.8px;top:357.24px">4</b>
<i style="left:9.00px;top:354.48px;width:1.6px;height:0.7px;background:#6c6c6c"></i>
<i style="left:8.00px;top:359.83px;width:2.6px;height:0.7px;background:#6c6c6c"></i>
<i style="left:9.00px;top:365.17px;width:1.6px;height:0.7px;background:#6c6c6c"></i>
<i style="left:0;top:370.51px;width:10.6px;height:0.8px;background:#5b5b5b"></i>
<b style="left:1.8px;top:372.81px">2</b>
<b style="left:1.8px;top:378.61px">6</b>
<i style="left:9.00px;top:375.85px;width:1.6px;height:0.7px;background:#6c6c6c"></i>
<i style="left:8.00px;top:381.20px;width:2.6px;height:0.7px;background:#6c6c6c"></i>
<i style="left:9.00px;top:386.54px;width:1.6px;height:0.7px;background:#6c6c6c"></i>
<i style="left:0;top:391.88px;width:10.6px;height:0.8px;background:#5b5b5b"></i>
<b style="left:1.8px;top:394.18px">2</b>
<b style="left:1.8px;top:399.98px">8</b>
<i style="left:9.00px;top:397.22px;width:1.6px;height:0.7px;background:#6c6c6c"></i>
<i style="left:8.00px;top:402.57px;width:2.6px;height:0.7px;background:#6c6c6c"></i>
<i style="left:9.00px;top:407.91px;width:1.6px;height:0.7px;background:#6c6c6c"></i>
<i style="left:0;top:413.25px;width:10.6px;height:0.8px;background:#5b5b5b"></i>
<b style="left:1.8px;top:415.55px">3</b>
<b style="left:1.8px;top:421.35px">0</b>
<i style="left:9.00px;top:418.59px;width:1.6px;height:0.7px;background:#6c6c6c"></i>
<i style="left:8.00px;top:423.94px;width:2.6px;height:0.7px;background:#6c6c6c"></i>
<i style="left:9.00px;top:429.28px;width:1.6px;height:0.7px;background:#6c6c6c"></i>
<i style="left:0;top:434.62px;width:10.6px;height:0.8px;background:#5b5b5b"></i>
<b style="left:1.8px;top:436.92px">3</b>
<b style="left:1.8px;top:442.72px">2</b>
<i style="left:9.00px;top:439.96px;width:1.6px;height:0.7px;background:#6c6c6c"></i>
<i style="left:8.00px;top:445.31px;width:2.6px;height:0.7px;background:#6c6c6c"></i>
<i style="left:9.00px;top:450.65px;width:1.6px;height:0.7px;background:#6c6c6c"></i>
<i style="left:0;top:455.99px;width:10.6px;height:0.8px;background:#5b5b5b"></i>
<b style="left:1.8px;top:458.29px">3</b>
<b style="left:1.8px;top:464.09px">4</b>
<i style="left:9.00px;top:461.33px;width:1.6px;height:0.7px;background:#6c6c6c"></i>
<i style="left:8.00px;top:466.68px;width:2.6px;height:0.7px;background:#6c6c6c"></i>
</div>
<!-- document -->
<div class="a" style="left:241.3px;top:161px;width:302.6px;height:302px;background:#cbe9f5"></div>
<!-- keycap -->
<div class="a" id="key" style="left:305px;top:224px;width:175px;height:175.5px;border-radius:13px;background:#bcbcbc;box-shadow:0 12px 20px -3px rgba(55,82,97,.8),0 4px 7px rgba(60,85,100,.42);overflow:hidden">
 <div class="a" style="left:-10px;top:-10px;width:195px;height:195.5px;filter:blur(2.5px);background:conic-gradient(from -45deg at 50% 50%,#e4e4e4 0deg,#f0f0f0 5deg,#f0f0f0 85deg,#b4b4b4 96deg,#b1b1b1 174deg,#a9a9a9 186deg,#a9a9a9 264deg,#b0b0b0 276deg,#b2b2b2 354deg,#e4e4e4 360deg)"></div>
 <div class="a" style="left:23px;top:23px;width:130px;height:130.5px;border-radius:11px;box-shadow:0 -4.5px 10px 6px rgba(226,224,224,1)"></div>
</div>
<div class="a" style="left:327.6px;top:246.8px;width:130.6px;height:131px;border-radius:11.5px;background:#dfdddd;border:0.8px solid #9a9a9a"></div>
<svg class="a" style="left:0;top:0" width="1000" height="532"><polygon points="430.9,245.9 432.8,235 437.3,236.8 521,152 440.7,240.2 441.1,243.4" fill="#f7232d"/></svg>
<!-- right dock -->
<div class="a" style="left:758.8px;top:40.3px;width:239px;height:7.2px;background:#3b3b3b"></div>
<div class="a" style="left:758.8px;top:47.5px;width:239px;height:485px;background:#424242"></div>
<!-- library column -->
<div class="a" style="left:958px;top:47.7px;width:39.5px;height:485px;background:#535353"></div>
<div class="a" style="left:958px;top:71.6px;width:39.5px;height:1.2px;background:#414141"></div>
<!-- header arrows -->
<svg class="a" style="left:773.4px;top:42.6px" width="6" height="3.4" viewBox="0 0 6 3.4"><path d="M2 0.3 L0.4 1.7 L2 3.1 Z M4.6 0.3 L3 1.7 L4.6 3.1 Z" fill="#c4c4c4"/></svg>
<svg class="a" style="left:947.6px;top:42.6px" width="6" height="3.4" viewBox="0 0 6 3.4"><path d="M0.4 0.3 L2 1.7 L0.4 3.1 Z M3 0.3 L4.6 1.7 L3 3.1 Z" fill="#c4c4c4"/></svg>
<svg class="a" style="left:988.6px;top:42.6px" width="6" height="3.4" viewBox="0 0 6 3.4"><path d="M2 0.3 L0.4 1.7 L2 3.1 Z M4.6 0.3 L3 1.7 L4.6 3.1 Z" fill="#c4c4c4"/></svg>
<!-- icon column -->
<div class="a" style="left:759.8px;top:224.2px;width:22.2px;height:308px;background:#515151"></div>
<div class="a ig" style="top:47.7px;height:41px"></div>
<div class="a ig" style="top:90px;height:23.5px"></div>
<div class="a ig" style="top:115.2px;height:23.7px"></div>
<div class="a ig" style="top:140.2px;height:40.6px"></div>
<div class="a ig" style="top:182.1px;height:40.4px"></div>
<div class="a gr" style="top:50.2px"></div><div class="a gr" style="top:92.4px"></div><div class="a gr" style="top:117px"></div><div class="a gr" style="top:142.3px"></div><div class="a gr" style="top:184.1px"></div>
<!-- history -->
<svg class="a" style="left:766px;top:56px" width="12" height="13" viewBox="0 0 12 13"><rect x="1.3" y="1.2" width="2.6" height="2.6" fill="none" stroke="#d0d0d0" stroke-width="0.7"/><rect x="1.3" y="4.6" width="2.6" height="2.6" fill="none" stroke="#d0d0d0" stroke-width="0.7"/><rect x="1" y="8" width="3.2" height="3.2" fill="#e4e4e4"/><path d="M6.6 4.2 C8.6 3 10.6 4.8 10 7.4 C9.7 8.8 8.8 10 7.4 10.8" fill="none" stroke="#dadada" stroke-width="1.2"/><path d="M5.6 4.6 L8 2.2 L8.4 5.4 Z" fill="#dadada"/></svg>
<!-- play -->
<svg class="a" style="left:767px;top:74.5px" width="11" height="10" viewBox="0 0 11 10"><path d="M1 0.8 L9.4 5 L1 9.2 Z" fill="#dcdcdc"/></svg>
<!-- info -->
<svg class="a" style="left:764.8px;top:97.9px" width="12" height="12" viewBox="0 0 12 12"><circle cx="6" cy="6" r="4.9" fill="none" stroke="#d8d8d8" stroke-width="0.9"/><path d="M6 3 V4 M6 5 V9" stroke="#dcdcdc" stroke-width="1.2"/></svg>
<!-- 3d-ish -->
<svg class="a" style="left:765px;top:122.4px" width="14" height="13" viewBox="0 0 14 13"><path d="M1 1.2 L6.6 2.2 L7.6 8.6 L2 7.6 Z M6.4 5 L12 6 L13 12 L7.4 11 Z" fill="none" stroke="#d0d0d0" stroke-width="0.8"/><path d="M2 2 L7 8 M7.6 5.8 L12.4 11.4 M3.2 7.6 L5.2 3 M8.6 11 L10.6 6.4" stroke="#c4c4c4" stroke-width="0.7"/></svg>
<!-- brushes in cup -->
<svg class="a" style="left:766px;top:147.4px" width="11" height="13" viewBox="0 0 11 13"><rect x="2.8" y="6.4" width="5.4" height="6" fill="#e4e4e4"/><path d="M1.8 1 C3 2.4 3.4 4 4 6.4 M5.5 0.6 V6.4 M9.6 1.8 C8.4 3 7.6 4.6 7.2 6.4" stroke="#e4e4e4" stroke-width="1.5" stroke-linecap="round" fill="none"/></svg>
<!-- brush presets -->
<svg class="a" style="left:764.6px;top:165.6px" width="14" height="11" viewBox="0 0 14 11"><path d="M0.6 2.6 C1.6 1 3.4 1.2 4.2 2.2 L4.2 3 C3.4 4 1.6 4.2 0.6 2.6 Z" fill="#e0e0e0"/><path d="M4 2.6 H12.6" stroke="#e0e0e0" stroke-width="1.1"/><path d="M2 7.6 H9.4" stroke="#e0e0e0" stroke-width="1.1"/><path d="M9 7.6 C9 5.6 10 4.6 11.4 4.8 C12.8 5.2 13.2 9 11.4 10 C10 10.2 9 9.4 9 7.6 Z" fill="#e0e0e0"/></svg>
<!-- A| -->
<div class="t" style="left:766.9px;top:190.6px;font-size:10.4px;line-height:11px;height:11px;color:#e0e0e0">A</div>
<div class="a" style="left:775.2px;top:191.6px;width:0.8px;height:8.4px;background:#e0e0e0"></div>
<!-- pilcrow -->
<svg class="a" style="left:767.4px;top:208px" width="9" height="11" viewBox="0 0 9 11"><path d="M4.4 0.6 H8 M5 0.6 V10 M7.2 0.6 V10" stroke="#dedede" stroke-width="1" fill="none"/><path d="M5 0.4 C0 0.2 0 5.6 5 5.4 Z" fill="#dedede"/></svg>
<!-- library column content -->
<div class="a gr" style="left:971.4px;top:50.2px;width:11.4px"></div>
<svg class="a" style="left:962.6px;top:56px" width="15" height="12" viewBox="0 0 15 12"><path d="M4.4 10.8 A3.9 3.9 0 0 1 3 3.6 A4.6 4.6 0 0 1 10.6 2.4 A4.2 4.2 0 0 1 10.4 10.8 Z" fill="#c9c9c9" stroke="#d6d6d6" stroke-width="0.6"/><path d="M4.8 8.6 C2.6 8.4 2.8 5 5.2 5.2 C6.6 5.4 7.6 7 8.8 8.2 M10 8.6 C12.6 8.2 12 4 9.2 4.2 C8 4.4 7.4 5.2 6.8 6" fill="none" stroke="#6e6e6e" stroke-width="0.8"/></svg>
<div class="t" style="left:981px;top:57.4px;font-size:7.4px;color:#e4e4e4">库</div>

<!-- swatches panel -->
<div class="a" style="left:783.7px;top:47.7px;width:172.7px;height:17px;background:#424242"></div>
<div class="a" style="left:810.2px;top:47.7px;width:25.2px;height:17.5px;background:#535353"></div>
<div class="a" style="left:783.7px;top:64.6px;width:172.7px;height:196.8px;background:#535353"></div>
<div class="t" style="left:789.6px;top:51.5px;font-size:7.4px;color:#9a9a9a">颜色</div>
<div class="t" style="left:815.8px;top:51.5px;font-size:7.4px;color:#e6e6e6">色板</div>
<div class="a" style="left:783.7px;top:82.8px;width:163px;height:164px;background:#4b4b4b"></div>
<div class="a" style="left:783.7px;top:246.4px;width:172.7px;height:0.9px;background:#444"></div>
<div class="a" style="left:786.8px;top:70.5px;width:156.2px;height:10.4px;background:#404040"></div>
<div id="sw">
<i style="left:787.70px;top:71.3px;width:8.90px;height:8.8px;background:#a0a0a0"></i>
<i style="left:797.40px;top:71.3px;width:8.90px;height:8.8px;background:#000000"></i>
<i style="left:807.10px;top:71.3px;width:8.90px;height:8.8px;background:#dedcdc"></i>
<i style="left:816.80px;top:71.3px;width:8.90px;height:8.8px;background:#e4e4e4"></i>
<i style="left:826.50px;top:71.3px;width:8.90px;height:8.8px;background:#cbe8f5"></i>
<i style="left:836.20px;top:71.3px;width:8.90px;height:8.8px;background:#f7f3f3"></i>
<i style="left:845.90px;top:71.3px;width:8.90px;height:8.8px;background:#f8f8f8"></i>
<i style="left:855.60px;top:71.3px;width:8.90px;height:8.8px;background:#f5f5f8"></i>
<i style="left:865.30px;top:71.3px;width:8.90px;height:8.8px;background:#636767"></i>
<i style="left:875.00px;top:71.3px;width:8.90px;height:8.8px;background:#5f5f5f"></i>
<i style="left:884.70px;top:71.3px;width:8.90px;height:8.8px;background:#070707"></i>
<i style="left:894.40px;top:71.3px;width:8.90px;height:8.8px;background:#ffffff"></i>
<i style="left:904.10px;top:71.3px;width:8.90px;height:8.8px;background:#aa8cc5"></i>
<i style="left:913.80px;top:71.3px;width:8.90px;height:8.8px;background:#84ccc9"></i>
<i style="left:923.50px;top:71.3px;width:8.90px;height:8.8px;background:#e6d23c"></i>
<i style="left:933.20px;top:71.3px;width:8.90px;height:8.8px;background:#c3c16c"></i>
<i style="left:784.00px;top:84.00px;width:10.12px;height:10.12px;background:#ff0000"></i>
<i style="left:794.92px;top:84.00px;width:10.12px;height:10.12px;background:#ffff00"></i>
<i style="left:805.84px;top:84.00px;width:10.12px;height:10.12px;background:#00ff00"></i>
<i style="left:816.76px;top:84.00px;width:10.12px;height:10.12px;background:#00ffff"></i>
<i style="left:827.68px;top:84.00px;width:10.12px;height:10.12px;background:#0000ff"></i>
<i style="left:838.60px;top:84.00px;width:10.12px;height:10.12px;background:#ff00ff"></i>
<i style="left:849.52px;top:84.00px;width:10.12px;height:10.12px;background:#ffffff"></i>
<i style="left:860.44px;top:84.00px;width:10.12px;height:10.12px;background:#ebebeb"></i>
<i style="left:871.36px;top:84.00px;width:10.12px;height:10.12px;background:#e1e1e1"></i>
<i style="left:882.28px;top:84.00px;width:10.12px;height:10.12px;background:#d7d7d7"></i>
<i style="left:893.20px;top:84.00px;width:10.12px;height:10.12px;background:#cccccc"></i>
<i style="left:904.12px;top:84.00px;width:10.12px;height:10.12px;background:#c2c2c2"></i>
<i style="left:915.04px;top:84.00px;width:10.12px;height:10.12px;background:#b7b7b7"></i>
<i style="left:925.96px;top:84.00px;width:10.12px;height:10.12px;background:#acacac"></i>
<i style="left:784.00px;top:94.90px;width:10.12px;height:10.12px;background:#a0a0a0"></i>
<i style="left:794.92px;top:94.90px;width:10.12px;height:10.12px;background:#959595"></i>
<i style="left:805.84px;top:94.90px;width:10.12px;height:10.12px;background:#e60012"></i>
<i style="left:816.76px;top:94.90px;width:10.12px;height:10.12px;background:#fff100"></i>
<i style="left:827.68px;top:94.90px;width:10.12px;height:10.12px;background:#009944"></i>
<i style="left:838.60px;top:94.90px;width:10.12px;height:10.12px;background:#00a0e9"></i>
<i style="left:849.52px;top:94.90px;width:10.12px;height:10.12px;background:#1d2088"></i>
<i style="left:860.44px;top:94.90px;width:10.12px;height:10.12px;background:#e4007f"></i>
<i style="left:871.36px;top:94.90px;width:10.12px;height:10.12px;background:#898989"></i>
<i style="left:882.28px;top:94.90px;width:10.12px;height:10.12px;background:#7d7d7d"></i>
<i style="left:893.20px;top:94.90px;width:10.12px;height:10.12px;background:#707070"></i>
<i style="left:904.12px;top:94.90px;width:10.12px;height:10.12px;background:#626262"></i>
<i style="left:915.04px;top:94.90px;width:10.12px;height:10.12px;background:#555555"></i>
<i style="left:925.96px;top:94.90px;width:10.12px;height:10.12px;background:#464646"></i>
<i style="left:784.00px;top:105.80px;width:10.12px;height:10.12px;background:#363636"></i>
<i style="left:794.92px;top:105.80px;width:10.12px;height:10.12px;background:#262626"></i>
<i style="left:805.84px;top:105.80px;width:10.12px;height:10.12px;background:#111111"></i>
<i style="left:816.76px;top:105.80px;width:10.12px;height:10.12px;background:#000000"></i>
<i style="left:827.68px;top:105.80px;width:10.12px;height:10.12px;background:#f29b76"></i>
<i style="left:838.60px;top:105.80px;width:10.12px;height:10.12px;background:#f6b37f"></i>
<i style="left:849.52px;top:105.80px;width:10.12px;height:10.12px;background:#facd89"></i>
<i style="left:860.44px;top:105.80px;width:10.12px;height:10.12px;background:#fff799"></i>
<i style="left:871.36px;top:105.80px;width:10.12px;height:10.12px;background:#cce198"></i>
<i style="left:882.28px;top:105.80px;width:10.12px;height:10.12px;background:#acd598"></i>
<i style="left:893.20px;top:105.80px;width:10.12px;height:10.12px;background:#89c997"></i>
<i style="left:904.12px;top:105.80px;width:10.12px;height:10.12px;background:#84ccc9"></i>
<i style="left:915.04px;top:105.80px;width:10.12px;height:10.12px;background:#7ecef4"></i>
<i style="left:925.96px;top:105.80px;width:10.12px;height:10.12px;background:#88abda"></i>
<i style="left:784.00px;top:116.70px;width:10.12px;height:10.12px;background:#8c97cb"></i>
<i style="left:794.92px;top:116.70px;width:10.12px;height:10.12px;background:#8f82bc"></i>
<i style="left:805.84px;top:116.70px;width:10.12px;height:10.12px;background:#aa89bd"></i>
<i style="left:816.76px;top:116.70px;width:10.12px;height:10.12px;background:#c490bf"></i>
<i style="left:827.68px;top:116.70px;width:10.12px;height:10.12px;background:#f19ec2"></i>
<i style="left:838.60px;top:116.70px;width:10.12px;height:10.12px;background:#f29c9f"></i>
<i style="left:849.52px;top:116.70px;width:10.12px;height:10.12px;background:#ec6941"></i>
<i style="left:860.44px;top:116.70px;width:10.12px;height:10.12px;background:#f19149"></i>
<i style="left:871.36px;top:116.70px;width:10.12px;height:10.12px;background:#f8b551"></i>
<i style="left:882.28px;top:116.70px;width:10.12px;height:10.12px;background:#fff45c"></i>
<i style="left:893.20px;top:116.70px;width:10.12px;height:10.12px;background:#b3d465"></i>
<i style="left:904.12px;top:116.70px;width:10.12px;height:10.12px;background:#80c269"></i>
<i style="left:915.04px;top:116.70px;width:10.12px;height:10.12px;background:#32b16c"></i>
<i style="left:925.96px;top:116.70px;width:10.12px;height:10.12px;background:#13b5b1"></i>
<i style="left:784.00px;top:127.60px;width:10.12px;height:10.12px;background:#00b7ee"></i>
<i style="left:794.92px;top:127.60px;width:10.12px;height:10.12px;background:#448aca"></i>
<i style="left:805.84px;top:127.60px;width:10.12px;height:10.12px;background:#556fb5"></i>
<i style="left:816.76px;top:127.60px;width:10.12px;height:10.12px;background:#5f52a0"></i>
<i style="left:827.68px;top:127.60px;width:10.12px;height:10.12px;background:#8957a1"></i>
<i style="left:838.60px;top:127.60px;width:10.12px;height:10.12px;background:#ae5da1"></i>
<i style="left:849.52px;top:127.60px;width:10.12px;height:10.12px;background:#ea68a2"></i>
<i style="left:860.44px;top:127.60px;width:10.12px;height:10.12px;background:#eb6877"></i>
<i style="left:871.36px;top:127.60px;width:10.12px;height:10.12px;background:#e60012"></i>
<i style="left:882.28px;top:127.60px;width:10.12px;height:10.12px;background:#eb6100"></i>
<i style="left:893.20px;top:127.60px;width:10.12px;height:10.12px;background:#f39800"></i>
<i style="left:904.12px;top:127.60px;width:10.12px;height:10.12px;background:#fff100"></i>
<i style="left:915.04px;top:127.60px;width:10.12px;height:10.12px;background:#8fc31f"></i>
<i style="left:925.96px;top:127.60px;width:10.12px;height:10.12px;background:#22ac38"></i>
<i style="left:784.00px;top:138.50px;width:10.12px;height:10.12px;background:#009944"></i>
<i style="left:794.92px;top:138.50px;width:10.12px;height:10.12px;background:#009e96"></i>
<i style="left:805.84px;top:138.50px;width:10.12px;height:10.12px;background:#00a0e9"></i>
<i style="left:816.76px;top:138.50px;width:10.12px;height:10.12px;background:#0068b7"></i>
<i style="left:827.68px;top:138.50px;width:10.12px;height:10.12px;background:#00479d"></i>
<i style="left:838.60px;top:138.50px;width:10.12px;height:10.12px;background:#1d2088"></i>
<i style="left:849.52px;top:138.50px;width:10.12px;height:10.12px;background:#601986"></i>
<i style="left:860.44px;top:138.50px;width:10.12px;height:10.12px;background:#920783"></i>
<i style="left:871.36px;top:138.50px;width:10.12px;height:10.12px;background:#e4007f"></i>
<i style="left:882.28px;top:138.50px;width:10.12px;height:10.12px;background:#e5004f"></i>
<i style="left:893.20px;top:138.50px;width:10.12px;height:10.12px;background:#a40000"></i>
<i style="left:904.12px;top:138.50px;width:10.12px;height:10.12px;background:#a84200"></i>
<i style="left:915.04px;top:138.50px;width:10.12px;height:10.12px;background:#ac6a00"></i>
<i style="left:925.96px;top:138.50px;width:10.12px;height:10.12px;background:#b7aa00"></i>
<i style="left:784.00px;top:149.40px;width:10.12px;height:10.12px;background:#638c0b"></i>
<i style="left:794.92px;top:149.40px;width:10.12px;height:10.12px;background:#097c25"></i>
<i style="left:805.84px;top:149.40px;width:10.12px;height:10.12px;background:#007130"></i>
<i style="left:816.76px;top:149.40px;width:10.12px;height:10.12px;background:#00736d"></i>
<i style="left:827.68px;top:149.40px;width:10.12px;height:10.12px;background:#0075a9"></i>
<i style="left:838.60px;top:149.40px;width:10.12px;height:10.12px;background:#004986"></i>
<i style="left:849.52px;top:149.40px;width:10.12px;height:10.12px;background:#002e73"></i>
<i style="left:860.44px;top:149.40px;width:10.12px;height:10.12px;background:#100964"></i>
<i style="left:871.36px;top:149.40px;width:10.12px;height:10.12px;background:#440062"></i>
<i style="left:882.28px;top:149.40px;width:10.12px;height:10.12px;background:#6a005f"></i>
<i style="left:893.20px;top:149.40px;width:10.12px;height:10.12px;background:#a4005b"></i>
<i style="left:904.12px;top:149.40px;width:10.12px;height:10.12px;background:#a40035"></i>
<i style="left:915.04px;top:149.40px;width:10.12px;height:10.12px;background:#7d0000"></i>
<i style="left:925.96px;top:149.40px;width:10.12px;height:10.12px;background:#7f2d00"></i>
<i style="left:784.00px;top:160.30px;width:10.12px;height:10.12px;background:#834e00"></i>
<i style="left:794.92px;top:160.30px;width:10.12px;height:10.12px;background:#8a8000"></i>
<i style="left:805.84px;top:160.30px;width:10.12px;height:10.12px;background:#3d6d00"></i>
<i style="left:816.76px;top:160.30px;width:10.12px;height:10.12px;background:#005e15"></i>
<i style="left:827.68px;top:160.30px;width:10.12px;height:10.12px;background:#005826"></i>
<i style="left:838.60px;top:160.30px;width:10.12px;height:10.12px;background:#005952"></i>
<i style="left:849.52px;top:160.30px;width:10.12px;height:10.12px;background:#005982"></i>
<i style="left:860.44px;top:160.30px;width:10.12px;height:10.12px;background:#003567"></i>
<i style="left:871.36px;top:160.30px;width:10.12px;height:10.12px;background:#00215a"></i>
<i style="left:882.28px;top:160.30px;width:10.12px;height:10.12px;background:#03004c"></i>
<i style="left:893.20px;top:160.30px;width:10.12px;height:10.12px;background:#32004b"></i>
<i style="left:904.12px;top:160.30px;width:10.12px;height:10.12px;background:#500047"></i>
<i style="left:915.04px;top:160.30px;width:10.12px;height:10.12px;background:#7e0043"></i>
<i style="left:925.96px;top:160.30px;width:10.12px;height:10.12px;background:#7d0022"></i>
<i style="left:784.00px;top:171.20px;width:10.12px;height:10.12px;background:#dcc9ac"></i>
<i style="left:794.92px;top:171.20px;width:10.12px;height:10.12px;background:#a8947c"></i>
<i style="left:805.84px;top:171.20px;width:10.12px;height:10.12px;background:#806c5b"></i>
<i style="left:816.76px;top:171.20px;width:10.12px;height:10.12px;background:#5c4c41"></i>
<i style="left:827.68px;top:171.20px;width:10.12px;height:10.12px;background:#3b322e"></i>
<i style="left:838.60px;top:171.20px;width:10.12px;height:10.12px;background:#d7b27b"></i>
<i style="left:849.52px;top:171.20px;width:10.12px;height:10.12px;background:#b48b55"></i>
<i style="left:860.44px;top:171.20px;width:10.12px;height:10.12px;background:#9b6f37"></i>
<i style="left:871.36px;top:171.20px;width:10.12px;height:10.12px;background:#83531f"></i>
<i style="left:882.28px;top:171.20px;width:10.12px;height:10.12px;background:#6a3c0a"></i>
</div>
<!-- swatches footer icons -->
<svg class="a" style="left:914.6px;top:251.2px" width="8" height="8" viewBox="0 0 8 8"><path d="M1 0.9 H6.6 V6.6 H3.4 L1 4.4 Z" fill="none" stroke="#dcdcdc" stroke-width="1"/><path d="M1 4.4 H3.4 V6.6 Z" fill="#dcdcdc"/></svg>
<svg class="a" style="left:931.6px;top:250.6px" width="8" height="8.4" viewBox="0 0 8 8.4"><path d="M0.8 1.8 H7.2 M3 1.6 V0.7 H5 V1.6" stroke="#7d7d7d" stroke-width="0.9" fill="none"/><path d="M1.5 2.6 H6.5 L6.1 7.8 H1.9 Z" fill="#7d7d7d"/></svg>
<!-- gap -->
<div class="a" style="left:783.7px;top:261.5px;width:172.7px;height:2px;background:#3e3e3e"></div>
<!-- properties panel -->
<div class="a" style="left:783.7px;top:263.5px;width:172.7px;height:17px;background:#424242"></div>
<div class="a" style="left:811px;top:263.5px;width:25.5px;height:17.2px;background:#535353"></div>
<div class="a" style="left:783.7px;top:280.4px;width:172.7px;height:132px;background:#535353"></div>
<div class="t" style="left:789.7px;top:267.2px;font-size:7.4px;color:#9a9a9a">调整</div>
<div class="t" style="left:816.6px;top:267.2px;font-size:7.4px;color:#e6e6e6">属性</div>
<div class="a hb" style="left:946.9px;top:269.6px"></div>
<div class="a hb" style="left:946.9px;top:54.4px"></div>
<!-- title row -->
<div class="a" style="left:790.9px;top:284.7px;width:12.6px;height:11.8px;background:#333;border-radius:1px"></div>
<svg class="a" style="left:792px;top:286.2px" width="10" height="9" viewBox="0 0 10 9"><rect x="1.7" y="1.7" width="6.2" height="5.6" fill="none" stroke="#dedede" stroke-width="0.8"/><g fill="#efefef"><rect x="0.8" y="0.8" width="1.8" height="1.8"/><rect x="7" y="0.8" width="1.8" height="1.8"/><rect x="0.8" y="6.4" width="1.8" height="1.8"/><rect x="7" y="6.4" width="1.8" height="1.8"/></g></svg>
<div class="a" style="left:806.3px;top:287px;width:10.4px;height:7.6px;background:#e6e6e6"></div>
<div class="a" style="left:809.3px;top:288.6px;width:4.4px;height:4.4px;border-radius:50%;background:#3a3a3a"></div>
<div class="t" style="left:822.2px;top:286.8px;font-size:7.15px;color:#dedede">实时形状属性</div>
<div class="a" style="left:783.7px;top:300.2px;width:172.7px;height:0.9px;background:#404040"></div>
<!-- scroll track -->
<div class="a" style="left:947.4px;top:301px;width:9px;height:96.4px;background:#4a4a4a;border-left:0.7px solid #444"></div>
<div class="a" style="left:949.2px;top:312.4px;width:6.4px;height:44px;background:#6b6b6b"></div>
<svg class="a chev" style="left:950px;top:305.6px"><path d="M0.4 2.6 L2.3 0.6 L4.2 2.6"/></svg>
<svg class="a chev" style="left:950px;top:389.6px"><path d="M0.4 0.5 L2.3 2.5 L4.2 0.5"/></svg>
<!-- W/H/X/Y -->
<div class="t p" style="left:789.8px;top:309.6px">W:</div>
<div class="a fld" style="left:802.2px;top:308.6px;width:33.4px;height:10.8px"></div>
<div class="t pv" style="left:803.6px;top:309.4px"><u>343</u> 像素</div>
<svg class="a" style="left:840.6px;top:310.4px" width="10.6" height="6" viewBox="0 0 10.6 6"><rect x="0.9" y="1.3" width="4.5" height="3.2" rx="1.6" fill="none" stroke="#c4c4c4" stroke-width="0.9"/><rect x="5.2" y="1.3" width="4.5" height="3.2" rx="1.6" fill="none" stroke="#c4c4c4" stroke-width="0.9"/></svg>
<div class="t p" style="left:858.8px;top:309.6px">H:</div>
<div class="a fld" style="left:868.7px;top:308.6px;width:33.2px;height:10.8px"></div>
<div class="t pv" style="left:870px;top:309.4px"><u>343</u> 像素</div>
<div class="t p" style="left:792.8px;top:325.8px">X:</div>
<div class="a fld" style="left:802.2px;top:324.7px;width:33.4px;height:10.8px"></div>
<div class="t pv" style="left:803.6px;top:325.5px"><u>229</u> 像素</div>
<div class="t p" style="left:860.6px;top:325.8px">Y:</div>
<div class="a fld" style="left:868.7px;top:324.7px;width:33.2px;height:10.8px"></div>
<div class="t pv" style="left:870px;top:325.5px"><u>230</u> 像素</div>
<div class="a" style="left:783.7px;top:338.2px;width:163.7px;height:0.8px;background:#444"></div>
<!-- fill/stroke row -->
<div class="a" style="left:788.5px;top:342.2px;width:17.8px;height:11.8px;border:0.8px solid #7a7a7a;padding:1.2px"><div style="width:100%;height:100%;background:#dfdcdc"></div></div>
<div class="a" style="left:808.6px;top:342.2px;width:18.4px;height:11.8px;border:0.8px solid #7a7a7a;padding:1.2px"><div style="width:100%;height:100%;background:#fff;position:relative">
<svg class="a" style="left:0;top:0" width="14.4" height="7.8" viewBox="0 0 14.4 8"><rect x="3.2" y="3" width="8" height="2" fill="#222"/><path d="M3.6 7.4 L5.4 5.2 M9.4 2.8 L11.6 0.4" stroke="#e8202a" stroke-width="1.1"/></svg></div></div>
<div class="a fld" style="left:829.8px;top:342.8px;width:39px;height:11.2px"></div>
<div class="t pv" style="left:831.6px;top:343.8px"><u>1</u> 像素</div>
<div class="a fld" style="left:869.8px;top:342.8px;width:8.4px;height:11.2px"></div>
<svg class="a chev" style="left:871.7px;top:347.4px"><path d="M0.4 0.5 L2.3 2.5 L4.2 0.5"/></svg>
<div class="a fld" style="left:881.9px;top:342.8px;width:20.4px;height:11.2px"></div>
<div class="a" style="left:884.3px;top:347.6px;width:9px;height:1.3px;background:#e8e8e8"></div>
<svg class="a chev" style="left:895.4px;top:347.2px"><path d="M0.4 0.5 L2.3 2.5 L4.2 0.5"/></svg>
<!-- row 2 dropdowns -->
<div class="a fld" style="left:788.5px;top:358.2px;width:37.6px;height:11px"></div>
<div class="a" style="left:795px;top:361px;width:5.2px;height:5.2px;border:1.5px solid #e8e8e8;background:#333"></div>
<svg class="a chev" style="left:820px;top:362.6px"><path d="M0.4 0.5 L2.3 2.5 L4.2 0.5"/></svg>
<div class="a fld" style="left:829.8px;top:358.2px;width:39px;height:11px"></div>
<svg class="a" style="left:835.6px;top:360.2px" width="7" height="7" viewBox="0 0 7 7"><path d="M0.6 3.4 H3.6" stroke="#e4e4e4" stroke-width="1.6"/><path d="M3.2 0.8 H6.2 V6 H3.2" fill="#e4e4e4"/></svg>
<svg class="a chev" style="left:862.8px;top:362.6px"><path d="M0.4 0.5 L2.3 2.5 L4.2 0.5"/></svg>
<div class="a fld" style="left:872.5px;top:358.2px;width:29.8px;height:11px"></div>
<svg class="a" style="left:877.4px;top:360px" width="8" height="7.4" viewBox="0 0 8 7.4"><path d="M0.6 6.8 V0.6 H7.4 V3.4 H3.6 V6.8 Z" fill="#ececec"/><rect x="4.6" y="4.4" width="1.6" height="1.6" fill="#ddd"/></svg>
<svg class="a chev" style="left:895.8px;top:362.6px"><path d="M0.4 0.5 L2.3 2.5 L4.2 0.5"/></svg>
<div class="a" style="left:783.7px;top:372px;width:163.7px;height:0.8px;background:#444"></div>
<!-- radii -->
<div class="a fld" style="left:799.7px;top:376.6px;width:103px;height:10.4px"></div>
<div class="t pv" style="left:801px;top:377px;letter-spacing:-0.35px"><u>40</u>像素<u>40</u>像素<u>40</u>像素<u>40</u>像素</div>
<div class="a" style="left:790px;top:391.2px;width:8.6px;height:8px;border:0.9px solid #cfcfcf;border-bottom:none;border-radius:2.6px 2.6px 0 0"></div>
<div class="a fld" style="left:802.6px;top:390.6px;width:41px;height:9px"></div>
<div class="a fld" style="left:846.2px;top:390.6px;width:41.4px;height:9px"></div>
<div class="a" style="left:892px;top:391.2px;width:8.6px;height:8px;border:0.9px solid #cfcfcf;border-bottom:none;border-radius:2.6px 2.6px 0 0"></div>
<!-- panel bottom region -->
<div class="a" style="left:783.7px;top:397.3px;width:172.7px;height:15px;background:#535353"></div>
<div class="a" style="left:783.7px;top:412.2px;width:172.7px;height:1.6px;background:#3e3e3e"></div>

<!-- layers panel -->
<div class="a" style="left:783.7px;top:413.6px;width:172.7px;height:17.2px;background:#424242"></div>
<div class="a" style="left:783.7px;top:413.6px;width:26.4px;height:17.4px;background:#535353"></div>
<div class="a" style="left:836.2px;top:413.6px;width:0.8px;height:17px;background:#3a3a3a"></div>
<div class="a" style="left:863px;top:413.6px;width:0.8px;height:17px;background:#3a3a3a"></div>
<div class="a" style="left:783.7px;top:430.6px;width:172.7px;height:102px;background:#535353"></div>
<div class="t" style="left:789.6px;top:417.6px;font-size:7.4px;color:#e6e6e6">图层</div>
<div class="t" style="left:816px;top:417.6px;font-size:7.4px;color:#9a9a9a">路径</div>
<div class="t" style="left:842.4px;top:417.6px;font-size:7.4px;color:#9a9a9a">通道</div>
<div class="a hb" style="left:947px;top:420.2px"></div>
<!-- filter row -->
<div class="a fld" style="left:787px;top:436.7px;width:51.4px;height:10.6px"></div>
<svg class="a" style="left:790.4px;top:438.4px" width="7" height="7" viewBox="0 0 7 7"><circle cx="4" cy="2.8" r="2" fill="none" stroke="#d8d8d8" stroke-width="0.9"/><path d="M2.6 4.2 L0.8 6.2" stroke="#d8d8d8" stroke-width="1"/></svg>
<div class="t pv" style="left:800px;top:437.2px">类型</div>
<svg class="a chev" style="left:832px;top:440.8px"><path d="M0.4 0.5 L2.3 2.5 L4.2 0.5"/></svg>
<svg class="a" style="left:847.6px;top:438.2px" width="9" height="7" viewBox="0 0 9 7"><rect x="0.6" y="0.6" width="7.6" height="5.8" fill="none" stroke="#dcdcdc" stroke-width="0.9"/><path d="M1.6 5.4 L3.4 3.4 L4.6 4.6 L5.6 3.8 L7.2 5.4 Z" fill="#dcdcdc"/></svg>
<svg class="a" style="left:862.8px;top:438px" width="7.6" height="7.6" viewBox="0 0 7.6 7.6"><circle cx="3.8" cy="3.8" r="3.1" fill="none" stroke="#dcdcdc" stroke-width="0.9"/><path d="M1.6 6 A3.1 3.1 0 0 1 6 1.6 Z" fill="#dcdcdc"/></svg>
<div class="t" style="left:878.6px;top:436.4px;font-family:'Liberation Serif',serif;font-weight:bold;font-size:9.4px;line-height:11px;height:11px;color:#e2e2e2">T</div>
<svg class="a" style="left:891.8px;top:437.8px" width="8" height="8" viewBox="0 0 8 8"><rect x="1.5" y="1.5" width="5" height="5" fill="none" stroke="#dcdcdc" stroke-width="0.8"/><g fill="#e8e8e8"><rect x="0.6" y="0.6" width="1.8" height="1.8"/><rect x="5.6" y="0.6" width="1.8" height="1.8"/><rect x="0.6" y="5.6" width="1.8" height="1.8"/><rect x="5.6" y="5.6" width="1.8" height="1.8"/></g></svg>
<svg class="a" style="left:907.4px;top:437.6px" width="7.4" height="8.4" viewBox="0 0 7.4 8.4"><path d="M0.8 0.6 H4.6 L6.6 2.6 V7.8 H0.8 Z" fill="none" stroke="#dcdcdc" stroke-width="0.9"/><rect x="1.2" y="4.4" width="2.8" height="3" fill="#dcdcdc"/></svg>
<div class="a" style="left:924.6px;top:437.4px;width:5.6px;height:9.8px;border-radius:2.8px;background:#3c3c3c"></div>
<div class="a" style="left:924.9px;top:436.8px;width:5px;height:5px;border-radius:50%;background:#e6e6e6"></div>
<div class="a" style="left:783.7px;top:449.8px;width:172.7px;height:0.8px;background:#444"></div>
<!-- blend row -->
<div class="a fld" style="left:787px;top:453.2px;width:70px;height:10.6px"></div>
<div class="t pv" style="left:791.6px;top:453.8px">正常</div>
<svg class="a chev" style="left:851px;top:457.4px"><path d="M0.4 0.5 L2.3 2.5 L4.2 0.5"/></svg>
<div class="t p" style="left:862.8px;top:453.8px;color:#d6d6d6;font-size:7.1px">不透明度:</div>
<div class="a fld" style="left:897.1px;top:453.2px;width:22.8px;height:10.6px"></div>
<div class="t pv" style="left:898.6px;top:454px;font-size:7.2px"><u>100%</u></div>
<div class="a fld" style="left:921.2px;top:453.2px;width:8.2px;height:10.6px"></div>
<svg class="a chev" style="left:923px;top:457.4px"><path d="M0.4 0.5 L2.3 2.5 L4.2 0.5"/></svg>
<!-- lock row -->
<div class="t p" style="left:787.6px;top:469.8px;color:#d0d0d0;font-size:7.4px">锁定:</div>
<svg class="a" style="left:810.4px;top:470.4px" width="7.2" height="7.2" viewBox="0 0 7.2 7.2"><rect x="0.5" y="0.5" width="6.2" height="6.2" fill="none" stroke="#c8c8c8" stroke-width="0.7"/><path d="M0.5 0.5 H2.6 V2.6 H0.5 Z M4.6 0.5 H6.7 V2.6 H4.6 Z M2.6 2.6 H4.6 V4.6 H2.6 Z M0.5 4.6 H2.6 V6.7 H0.5 Z M4.6 4.6 H6.7 V6.7 H4.6 Z" fill="#9c9c9c"/></svg>
<svg class="a" style="left:823.4px;top:469.6px" width="8" height="9" viewBox="0 0 8 9"><path d="M7 0.8 L3.4 5 L4.2 5.8 L7.4 1.4 Z" fill="#d4d4d4"/><path d="M3 5.4 C1.8 5.6 2 7 0.8 7.6 C2.4 8.2 3.8 7.4 3.8 6.2 Z" fill="#d4d4d4"/></svg>
<svg class="a" style="left:836.4px;top:470px" width="8" height="8" viewBox="0 0 8 8"><path d="M4 0.6 V7.4 M0.6 4 H7.4" stroke="#d4d4d4" stroke-width="0.9"/><path d="M4 0 L5.2 1.6 H2.8 Z M4 8 L5.2 6.4 H2.8 Z M0 4 L1.6 2.8 V5.2 Z M8 4 L6.4 2.8 V5.2 Z" fill="#d4d4d4"/></svg>
<svg class="a" style="left:848.6px;top:470.2px" width="8" height="8" viewBox="0 0 8 8"><path d="M1.6 0.4 V6.4 H7.6 M0.2 1.8 H6.2 V7.8" fill="none" stroke="#d4d4d4" stroke-width="0.9"/></svg>
<svg class="a" style="left:864.2px;top:469.6px" width="7" height="9" viewBox="0 0 7 9"><path d="M1.8 4 V2.6 A1.7 1.7 0 0 1 5.2 2.6 V4" fill="none" stroke="#d4d4d4" stroke-width="0.9"/><rect x="0.8" y="4" width="5.4" height="4.2" fill="#d4d4d4"/></svg>
<div class="t p" style="left:877.6px;top:469.8px;color:#d6d6d6;font-size:7.4px">填充:</div>
<div class="a fld" style="left:897.1px;top:469.5px;width:22.8px;height:10.4px"></div>
<div class="t pv" style="left:898.6px;top:470.2px;font-size:7.2px"><u>100%</u></div>
<div class="a fld" style="left:921.2px;top:469.5px;width:8.2px;height:10.4px"></div>
<svg class="a chev" style="left:923px;top:473.6px"><path d="M0.4 0.5 L2.3 2.5 L4.2 0.5"/></svg>
<!-- layer list -->
<div class="a" style="left:785px;top:483.4px;width:162px;height:49px;background:#4d4d4d"></div>
<div class="a" style="left:785px;top:483.4px;width:17.2px;height:49px;background:#4a4a4a;border-right:0.8px solid #404040"></div>
<div class="a" style="left:947px;top:483.4px;width:9.4px;height:49px;background:#4a4a4a"></div>
<svg class="a chev" style="left:949.6px;top:488.8px"><path d="M0.4 2.6 L2.3 0.6 L4.2 2.6"/></svg>
<div class="a" style="left:948.6px;top:521.2px;width:6.6px;height:11px;background:#6b6b6b"></div>
<!-- effects rows -->
<svg class="a" style="left:823.6px;top:484.4px" width="8" height="5" viewBox="0 0 8 5"><path d="M0.6 2.5 C2.4 0.2 5.6 0.2 7.4 2.5 C5.6 4.8 2.4 4.8 0.6 2.5 Z" fill="none" stroke="#bdbdbd" stroke-width="0.8"/><circle cx="4" cy="2.5" r="1" fill="#bdbdbd"/></svg>
<div class="t" style="left:837.2px;top:482.6px;font-size:7.1px;color:#cfcfcf">效果</div>
<svg class="a" style="left:823.6px;top:494.2px" width="8" height="5" viewBox="0 0 8 5"><path d="M0.6 2.5 C2.4 0.2 5.6 0.2 7.4 2.5 C5.6 4.8 2.4 4.8 0.6 2.5 Z" fill="none" stroke="#bdbdbd" stroke-width="0.8"/><circle cx="4" cy="2.5" r="1" fill="#bdbdbd"/></svg>
<div class="t" style="left:837.2px;top:492.6px;font-size:7.1px;color:#cfcfcf">内阴影</div>
<!-- selected layer row -->
<div class="a" style="left:785px;top:501.5px;width:162px;height:0.8px;background:#3c3c3c"></div>
<div class="a" style="left:802.2px;top:502.3px;width:144.8px;height:25.6px;background:#696969"></div>
<div class="a" style="left:785px;top:527.8px;width:162px;height:0.8px;background:#3c3c3c"></div>
<svg class="a" style="left:789px;top:512.4px" width="9" height="6" viewBox="0 0 9 6"><path d="M0.6 3 C2.6 0.2 6.4 0.2 8.4 3 C6.4 5.8 2.6 5.8 0.6 3 Z" fill="none" stroke="#d0d0d0" stroke-width="0.9"/><circle cx="4.5" cy="3" r="1.3" fill="#d0d0d0"/></svg>
<div class="a" style="left:803.7px;top:503.5px;width:21px;height:22px;border:1px solid #e2e2e2;background:#fff;background-image:linear-gradient(45deg,#bdbdbd 25%,transparent 25%,transparent 75%,#bdbdbd 75%),linear-gradient(45deg,#bdbdbd 25%,transparent 25%,transparent 75%,#bdbdbd 75%);background-size:6px 6px;background-position:0 0,3px 3px"></div>
<div class="a" style="left:808.4px;top:508.6px;width:11.6px;height:11.6px;border-radius:2px;background:#e2e0e0;border:0.5px solid #777"></div>
<div class="a" style="left:819.4px;top:520.2px;width:5px;height:5px;border:0.9px solid #eee;background:#5a5a5a"></div>
<div class="t" style="left:830.2px;top:510.6px;font-size:7.3px;color:#ececec">圆角矩形 1 拷贝</div>
<div class="t" style="left:932px;top:509.8px;font-size:7.6px;font-style:italic;font-family:'Liberation Serif',serif;color:#ddd">fx</div>
<svg class="a chev" style="left:940.6px;top:513.4px"><path d="M0.4 2.6 L2.3 0.6 L4.2 2.6"/></svg>

<!-- watermark -->
<div id="wm" class="a" style="left:789px;top:455px;width:211px;height:77px;overflow:hidden;opacity:.74">
<div class="a" style="left:2.6px;top:0;width:60px;height:77px;overflow:hidden"><div class="t" style="left:-24.7px;top:25.1px;font-size:40px;line-height:44px;height:44px;font-weight:bold;color:#fff;font-family:'Liberation Sans',sans-serif">Bai</div></div>
<svg class="a" style="left:39px;top:5px" width="56" height="62" viewBox="0 0 56 62">
<g fill="#fff">
<ellipse cx="7.8" cy="22.3" rx="5.4" ry="7.9" transform="rotate(-18 7.8 22.3)"/>
<ellipse cx="20.3" cy="10.5" rx="6.2" ry="8.4" transform="rotate(-6 20.3 10.5)"/>
<ellipse cx="36.1" cy="11.2" rx="6.4" ry="8.1" transform="rotate(8 36.1 11.2)"/>
<ellipse cx="46.6" cy="26.9" rx="5.6" ry="7.9" transform="rotate(20 46.6 26.9)"/>
<path d="M27.6 23.3 C33 23.3 37 25.5 40.5 29.5 C44 33.5 50.5 38.5 50.5 46 C50.5 53 45 56.5 39.5 56 C35 55.4 31.5 54.6 27.6 54.6 C23.5 54.6 20 55.4 15.5 56 C10 56.5 4.2 53 4.2 46 C4.2 38.5 11 33.5 14.6 29.5 C18.2 25.5 22 23.3 27.6 23.3 Z"/>
</g>
<text x="0" y="0" transform="translate(13.2 51) scale(1.13 1)" style="font:bold 19.6px 'Liberation Sans',sans-serif" fill="#5a5a5a" stroke="#5a5a5a" stroke-width="0.5">du</text>
</svg>
<div class="t" style="left:94.6px;top:31.2px;font-size:28.2px;line-height:32px;height:32px;font-weight:bold;color:#fff;font-family:'Noto Sans CJK SC',sans-serif">经验</div>
<div class="t" style="left:-17.6px;top:65.4px;font-size:18.9px;line-height:22px;height:22px;font-weight:bold;color:#fff;font-family:'Liberation Sans',sans-serif">jingyan.baidu.com</div>
</div>

</body></html>
